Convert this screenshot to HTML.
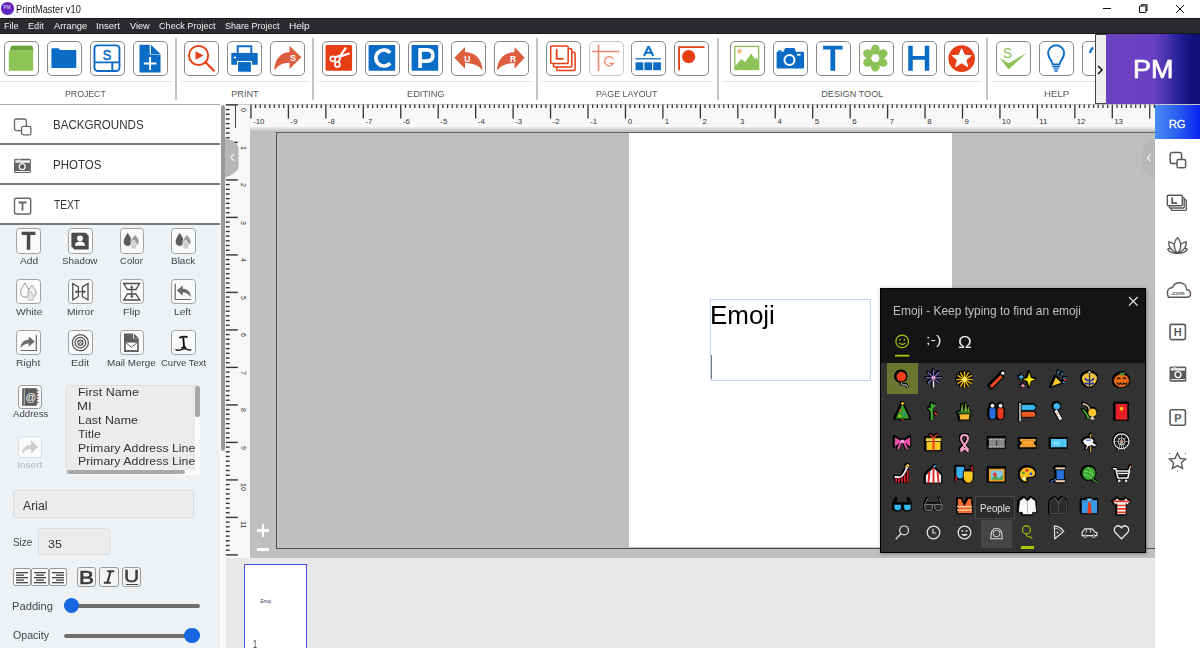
<!DOCTYPE html>
<html><head><meta charset="utf-8">
<style>
*{margin:0;padding:0;box-sizing:border-box;}
html,body{width:1200px;height:648px;overflow:hidden;background:#fff;font-family:"Liberation Sans", sans-serif;position:relative;}
.a{position:absolute;}
.t{position:absolute;white-space:nowrap;line-height:1;}
.btn{position:absolute;top:40.5px;width:35px;height:35.5px;border:1.5px solid #888;border-radius:5px;background:#fff;}
.btn svg{position:absolute;left:0;top:0;}
.tb{position:absolute;width:24.6px;height:25.4px;border:1.4px solid #a2a2a2;border-radius:3.5px;background:#f9fafb;}
.tb svg{position:absolute;left:-1.4px;top:-1.4px;overflow:visible;}
</style></head><body>
<div class="a" style="left:1.1px;top:2.4px;width:12.6px;height:12.4px;border-radius:50%;background:linear-gradient(180deg,#6a1fb8,#5a2ac0);"></div>
<div class="t" style="left:3.6px;top:6.2px;font-size:4.6px;color:#c8b8f0;font-weight:bold;">PM</div><div class="t" style="left:16.16px;top:5.00px;font-size:10.00px;color:#1a1a1a;transform:scaleX(0.925);transform-origin:0 0;">PrintMaster v10</div><div class="a" style="left:1103px;top:8px;width:7.6px;height:1px;background:#111;"></div>
<svg class="a" style="left:1138px;top:3px" width="11" height="11" viewBox="0 0 11 11"><rect x="1.5" y="3" width="6.5" height="6.5" rx="1.2" fill="none" stroke="#111" stroke-width="1.1"/><path d="M3.5 3V1.8h5.5v5.5H8" fill="none" stroke="#111" stroke-width="1.1"/></svg>
<svg class="a" style="left:1175px;top:4px" width="10" height="10" viewBox="0 0 10 10"><path d="M1 1L9 9M9 1L1 9" stroke="#111" stroke-width="1"/></svg>
<div class="a" style="left:0;top:18px;width:1200px;height:15.8px;background:#2a2b2e;border-top:1.8px solid #18191a;border-bottom:1.8px solid #141515;"></div><div class="t" style="left:4.37px;top:21.00px;font-size:9.86px;color:#f2f2f2;transform:scaleX(0.926);transform-origin:0 0;">File</div><div class="t" style="left:27.97px;top:21.00px;font-size:9.86px;color:#f2f2f2;transform:scaleX(0.928);transform-origin:0 0;">Edit</div><div class="t" style="left:54.00px;top:21.00px;font-size:9.86px;color:#f2f2f2;transform:scaleX(0.950);transform-origin:0 0;">Arrange</div><div class="t" style="left:96.14px;top:21.00px;font-size:9.86px;color:#f2f2f2;transform:scaleX(0.968);transform-origin:0 0;">Insert</div><div class="t" style="left:129.60px;top:21.00px;font-size:9.86px;color:#f2f2f2;transform:scaleX(0.930);transform-origin:0 0;">View</div><div class="t" style="left:158.74px;top:21.00px;font-size:9.86px;color:#f2f2f2;transform:scaleX(0.924);transform-origin:0 0;">Check Project</div><div class="t" style="left:225.39px;top:21.00px;font-size:9.86px;color:#f2f2f2;transform:scaleX(0.915);transform-origin:0 0;">Share Project</div><div class="t" style="left:288.69px;top:21.00px;font-size:9.86px;color:#f2f2f2;transform:scaleX(1.023);transform-origin:0 0;">Help</div><div class="a" style="left:0;top:103.5px;width:1200px;height:1px;background:#c8c8c8;"></div><div class="a" style="left:175.25px;top:38px;width:1.5px;height:61.5px;background:#c4c4c4;"></div><div class="a" style="left:312.25px;top:38px;width:1.5px;height:61.5px;background:#c4c4c4;"></div><div class="a" style="left:536.25px;top:38px;width:1.5px;height:61.5px;background:#c4c4c4;"></div><div class="a" style="left:717.25px;top:38px;width:1.5px;height:61.5px;background:#c4c4c4;"></div><div class="a" style="left:986.25px;top:38px;width:1.5px;height:61.5px;background:#c4c4c4;"></div><div class="a" style="left:0px;top:81px;width:172px;height:1px;background:#e4e4e4;"></div><div class="a" style="left:181px;top:81px;width:128px;height:1px;background:#e4e4e4;"></div><div class="a" style="left:318px;top:81px;width:214px;height:1px;background:#e4e4e4;"></div><div class="a" style="left:542px;top:81px;width:171px;height:1px;background:#e4e4e4;"></div><div class="a" style="left:723px;top:81px;width:259px;height:1px;background:#e4e4e4;"></div><div class="a" style="left:992px;top:81px;width:103px;height:1px;background:#e4e4e4;"></div><div class="t" style="left:65.40px;top:90.00px;font-size:9.13px;color:#555;transform:scaleX(0.957);transform-origin:0 0;">PROJECT</div><div class="t" style="left:231.27px;top:90.00px;font-size:9.13px;color:#555;">PRINT</div><div class="t" style="left:406.66px;top:90.00px;font-size:9.13px;color:#555;transform:scaleX(1.015);transform-origin:0 0;">EDITING</div><div class="t" style="left:596.29px;top:90.00px;font-size:9.13px;color:#555;transform:scaleX(0.975);transform-origin:0 0;">PAGE LAYOUT</div><div class="t" style="left:821.27px;top:90.00px;font-size:9.13px;color:#555;">DESIGN TOOL</div><div class="t" style="left:1043.53px;top:90.00px;font-size:9.13px;color:#555;transform:scaleX(1.060);transform-origin:0 0;">HELP</div><div class="btn" style="left:4px;"><svg width="35" height="36" viewBox="1.5 1.5 35 36"><path d="M6.3 10.2l1.2-4.2c.2-.5.5-.7 1-.7h19.6c.5 0 .8.2 1 .7l1.1 4.2z" fill="#6aa53a"/><path d="M5.3 10.2h24.3v19.5c0 .3-.2.5-.5.5h-23.3c-.3 0-.5-.2-.5-.5z" fill="#8cc456"/><path d="M5.3 10.4h24.3" stroke="#a8d880" stroke-width="0.6" stroke-dasharray="1 1"/></svg></div><div class="btn" style="left:47px;"><svg width="35" height="36" viewBox="1.5 1.5 35 36"><path d="M4.9 9.3c0-.8.4-1.5 1.2-1.5h5.5c.6 0 1 .3 1.3.8l.6.9h15.1c.8 0 1.2.5 1.2 1.2v15.6c0 .8-.4 1.2-1.2 1.2h-22.5c-.8 0-1.2-.4-1.2-1.2z" fill="#0b6cc6"/></svg></div><div class="btn" style="left:90px;"><svg width="35" height="36" viewBox="1.5 1.5 35 36"><rect x="4.95" y="4.85" width="25" height="25.7" rx="3.2" fill="none" stroke="#0b6cc6" stroke-width="1.9"/><path d="M4.95 21.9h25M22.8 21.9v8.6" stroke="#0b6cc6" stroke-width="1.9"/><text x="17.5" y="19.6" font-size="15" fill="#0b6cc6" stroke="#0b6cc6" stroke-width="0.6" text-anchor="middle" font-family="Liberation Sans" transform="translate(17.5 0) scale(0.85 1) translate(-17.5 0)">S</text></svg></div><div class="btn" style="left:133px;"><svg width="35" height="36" viewBox="1.5 1.5 35 36"><path d="M7 4.25h10.2v9.8h10.8v17.95h-21z" fill="#0b6cc6"/><path d="M18.4 4.25l9.6 9.3h-9.6z" fill="#0b6cc6"/><path d="M17.6 16.6v12.8M11.3 23h12.7" stroke="#fff" stroke-width="1.9"/></svg></div><div class="btn" style="left:184px;"><svg width="35" height="36" viewBox="1.5 1.5 35 36"><circle cx="15.1" cy="14.95" r="9.6" fill="none" stroke="#e83e16" stroke-width="1.9"/><path d="M22 21.8l9 9" stroke="#e83e16" stroke-width="2.1"/><path d="M12 10.75l8 4.25-8 4.2z" fill="#e83e16"/></svg></div><div class="btn" style="left:227px;"><svg width="35" height="36" viewBox="1.5 1.5 35 36"><path d="M11.2 13v-7.3h13.6v7.3" fill="none" stroke="#0b6cc6" stroke-width="1.9"/><path d="M4.8 12.4h26.4v11.9h-26.4z" fill="#0b6cc6"/><rect x="11" y="21" width="14" height="10.8" fill="#0b6cc6" stroke="#fff" stroke-width="1.1"/><circle cx="8.5" cy="17" r="1.1" fill="#fff"/></svg></div><div class="btn" style="left:270px;"><svg width="35" height="36" viewBox="1.5 1.5 35 36"><path d="M4.8 30.25C4.8 19 11 12 20 11.4V5.3L31.9 16.7 20 28.4V22.2C13 22.2 8 25 4.8 30.25z" fill="#dc5e3e"/><text x="23.4" y="20.6" font-size="9" font-weight="bold" fill="#fff" text-anchor="middle" font-family="Liberation Sans">S</text></svg></div><div class="btn" style="left:322px;"><svg width="35" height="36" viewBox="1.5 1.5 35 36"><rect x="4" y="4.6" width="26.6" height="25.7" rx="1.5" fill="#e83e16"/><circle cx="11.3" cy="18.4" r="2.5" fill="none" stroke="#fff" stroke-width="1.7"/><circle cx="15.9" cy="23.9" r="2.5" fill="none" stroke="#fff" stroke-width="1.7"/><path d="M13.5 16.8l5.5-1.8 5.5-7.8M17.2 21.5l1.8-5.5 9.2-3.2" fill="none" stroke="#fff" stroke-width="2.2"/></svg></div><div class="btn" style="left:365px;"><svg width="35" height="36" viewBox="1.5 1.5 35 36"><rect x="4.1" y="4.6" width="26.6" height="25.7" rx="1" fill="#0b6cc6"/><path d="M25.6 12.4a8 8 0 1 0 0 10.2" fill="none" stroke="#fff" stroke-width="3.6"/></svg></div><div class="btn" style="left:408px;"><svg width="35" height="36" viewBox="1.5 1.5 35 36"><rect x="4.1" y="4.6" width="26.6" height="25.7" rx="1" fill="#0b6cc6"/><path d="M12.6 27.6v-18.2h6.6c4 0 6.2 2.2 6.2 5.6s-2.2 5.6-6.2 5.6h-6.6" fill="none" stroke="#fff" stroke-width="3.6"/></svg></div><div class="btn" style="left:451px;"><svg width="35" height="36" viewBox="1.5 1.5 35 36"><path d="M31.9 30.3C31.9 19 25 12 14.5 11.6V6.4L3.8 17.3 14.5 28.2V22.6C21.5 22.6 28.5 24.5 31.9 30.3z" fill="#dc5e3e"/><text x="16.8" y="21.9" font-size="8.5" font-weight="bold" fill="#fff" text-anchor="middle" font-family="Liberation Sans">U</text></svg></div><div class="btn" style="left:494px;"><svg width="35" height="36" viewBox="1.5 1.5 35 36"><path d="M3.6 30.3C3.6 19 10.5 12 21 11.6V6.4L31.2 17.3 21 28.2V22.6C14 22.6 7 24.5 3.6 30.3z" fill="#dc5e3e"/><text x="19.6" y="21.9" font-size="8.5" font-weight="bold" fill="#fff" text-anchor="middle" font-family="Liberation Sans">R</text></svg></div><div class="btn" style="left:546px;"><svg width="35" height="36" viewBox="1.5 1.5 35 36"><rect x="11.3" y="11.8" width="18.3" height="18.3" rx="1.2" fill="#fff" stroke="#e83e16" stroke-width="1.5"/><rect x="8" y="8.3" width="18.3" height="18.3" rx="1.2" fill="#fff" stroke="#e83e16" stroke-width="1.5"/><rect x="5.2" y="5.4" width="17.5" height="17.5" rx="1.2" fill="#fff" stroke="#e83e16" stroke-width="1.5"/><path d="M11.2 8.7v9.7h6.8" fill="none" stroke="#e83e16" stroke-width="1.8"/></svg></div><div class="btn" style="left:588.5px;border-color:#c8c8c8;"><svg width="35" height="36" viewBox="1.5 1.5 35 36"><path d="M10 4.25v26.25M3.2 11h27.5" stroke="#f0866c" stroke-width="1.6"/><path d="M24.6 18.3a4.6 4.6 0 1 0 .3 4.5h-4" fill="none" stroke="#f0866c" stroke-width="1.3"/></svg></div><div class="btn" style="left:631px;"><svg width="35" height="36" viewBox="1.5 1.5 35 36"><path d="M13.5 15.5l4.2-9h.8l4.2 9M15 12.3h6" fill="none" stroke="#0b6cc6" stroke-width="2"/><path d="M5 18.3h25.4" stroke="#0b6cc6" stroke-width="1.3"/><rect x="5" y="21.8" width="7.7" height="7.9" fill="#0b6cc6"/><rect x="13.9" y="21.8" width="7.7" height="7.9" fill="#0b6cc6"/><rect x="22.7" y="21.8" width="7.7" height="7.9" fill="#0b6cc6"/></svg></div><div class="btn" style="left:674px;"><svg width="35" height="36" viewBox="1.5 1.5 35 36"><path d="M5.6 29.7V6.6h25.4" fill="none" stroke="#e83e16" stroke-width="1.9"/><circle cx="15.2" cy="16.2" r="6.6" fill="#e83e16"/></svg></div><div class="btn" style="left:730px;"><svg width="35" height="36" viewBox="1.5 1.5 35 36"><rect x="5.35" y="5.9" width="23.8" height="23.1" fill="none" stroke="#8cc257" stroke-width="1.3"/><path d="M5.3 29.6v-3.6l6.5-7.5 4 3 5.8-8.5 3.7 5.5 1.5-1.2 2.8 3.5v8.8z" fill="#8cc257"/><circle cx="10" cy="10.8" r="2.2" fill="#f0c088"/></svg></div><div class="btn" style="left:772.5px;"><svg width="35" height="36" viewBox="1.5 1.5 35 36"><path d="M4.1 12.5c0-.8.5-1.3 1.3-1.3h5.6l1.7-3.7h9.2l1.5 3.7h6.8c.8 0 1.3.5 1.3 1.3v14.3c0 .8-.5 1.3-1.3 1.3h-24.8c-.8 0-1.3-.5-1.3-1.3z" fill="#0b6cc6"/><circle cx="17" cy="19.6" r="5" fill="none" stroke="#fff" stroke-width="2"/><rect x="24.5" y="13.3" width="3.5" height="1.8" fill="#fff"/><rect x="5.5" y="9.8" width="3.5" height="1.5" fill="#0b6cc6"/></svg></div><div class="btn" style="left:816px;"><svg width="35" height="36" viewBox="1.5 1.5 35 36"><path d="M7.6 5.3h19.4v3.8h-7.3v21.15h-4.8v-21.15h-7.3z" fill="#0b6cc6"/></svg></div><div class="btn" style="left:859px;"><svg width="35" height="36" viewBox="1.5 1.5 35 36"><ellipse cx="16.85" cy="9.3" rx="4.4" ry="5.2" transform="rotate(0 16.85 17.6)" fill="#8cc257"/><ellipse cx="16.85" cy="9.3" rx="4.4" ry="5.2" transform="rotate(60 16.85 17.6)" fill="#8cc257"/><ellipse cx="16.85" cy="9.3" rx="4.4" ry="5.2" transform="rotate(120 16.85 17.6)" fill="#8cc257"/><ellipse cx="16.85" cy="9.3" rx="4.4" ry="5.2" transform="rotate(180 16.85 17.6)" fill="#8cc257"/><ellipse cx="16.85" cy="9.3" rx="4.4" ry="5.2" transform="rotate(240 16.85 17.6)" fill="#8cc257"/><ellipse cx="16.85" cy="9.3" rx="4.4" ry="5.2" transform="rotate(300 16.85 17.6)" fill="#8cc257"/><circle cx="16.85" cy="17.6" r="3.9" fill="#fff"/></svg></div><div class="btn" style="left:902px;"><svg width="35" height="36" viewBox="1.5 1.5 35 36"><path d="M6.75 5.3h4.5v10.3h12v-10.3h4.5v24.95h-4.5v-10.9h-12v10.9h-4.5z" fill="#0b6cc6"/></svg></div><div class="btn" style="left:944px;"><svg width="35" height="36" viewBox="1.5 1.5 35 36"><circle cx="18.15" cy="18.1" r="13.3" fill="#e83e16"/><path d="M18.15 7.2l3.1 7 7.4.5-5.7 4.8 1.9 7.4-6.7-4.1-6.7 4.1 1.9-7.4-5.7-4.8 7.4-.5z" fill="#fff"/></svg></div><div class="btn" style="left:996px;"><svg width="35" height="36" viewBox="1.5 1.5 35 36"><path d="M4.2 17.5l8.8 11.4 18.1-16.3-18 10.2z" fill="#8cc257"/><text x="11.8" y="17.3" font-size="14" fill="#8cc257" text-anchor="middle" font-family="Liberation Sans">S</text></svg></div><div class="btn" style="left:1039px;"><svg width="35" height="36" viewBox="1.5 1.5 35 36"><path d="M14.2 24c0-3.5-4.6-6-4.6-11.2a8 8 0 0 1 16 0c0 5.2-4.6 7.7-4.6 11.2z" fill="none" stroke="#0b6cc6" stroke-width="1.9"/><path d="M14 26.2h7.2M15 28.4h5.2M16 30.5h3.2" stroke="#0b6cc6" stroke-width="1.4"/></svg></div><div class="btn" style="left:1082px;"><svg width="35" height="36" viewBox="1.5 1.5 35 36"><path d="M7.5 12.5c.5-3 2-5.5 4-6.5l.5 2.5c-1 .8-2 2.2-2.3 4z" fill="#0b6cc6"/></svg></div><div class="a" style="left:1094.5px;top:34px;width:11.5px;height:70px;background:#eee;border-left:1.5px solid #444;border-top:1px solid #444;border-bottom:1px solid #444;"></div>
<svg class="a" style="left:1096px;top:64px" width="8" height="12" viewBox="0 0 8 12"><path d="M2 2l4 4-4 4" fill="none" stroke="#111" stroke-width="1.5"/></svg>
<div class="a" style="left:1106px;top:34px;width:94px;height:70px;background:linear-gradient(90deg,#6c42c2 0%,#6a40c2 50%,#4a34b0 64%,#26229a 76%,#121280 88%,#0e0e78 100%);"></div>
<div class="t" style="left:1133.35px;top:57.00px;font-size:24.93px;color:#fff;transform:scaleX(1.078);transform-origin:0 0;-webkit-text-stroke:0.7px #fff;">PM</div><div class="a" style="left:0;top:104px;width:221px;height:120px;background:#fff;"></div><div class="a" style="left:0;top:224px;width:221px;height:424px;background:#eff2f5;"></div><div class="a" style="left:0;top:143.4px;width:221px;height:2px;background:#7a7a7a;"></div><div class="a" style="left:0;top:183.3px;width:221px;height:2px;background:#7a7a7a;"></div><div class="a" style="left:0;top:223.2px;width:221px;height:2px;background:#7a7a7a;"></div><div class="a" style="left:0;top:104px;width:221px;height:1px;background:#aaa;"></div><div class="t" style="left:52.87px;top:120.00px;font-size:11.88px;color:#333;transform:scaleX(0.974);transform-origin:0 0;">BACKGROUNDS</div><div class="t" style="left:52.88px;top:160.00px;font-size:11.88px;color:#333;transform:scaleX(0.968);transform-origin:0 0;">PHOTOS</div><div class="t" style="left:53.60px;top:200.00px;font-size:11.88px;color:#333;transform:scaleX(0.850);transform-origin:0 0;">TEXT</div><svg class="a" style="left:0;top:104px" width="40" height="120" viewBox="0 104 40 120"><rect x="14.5" y="119" width="11.8" height="11.6" rx="2" fill="#fff" stroke="#666" stroke-width="1.3"/><rect x="21.5" y="126.3" width="9.4" height="8.6" rx="1.8" fill="#fff" stroke="#666" stroke-width="1.3"/><rect x="14" y="158.8" width="16.9" height="14.3" rx="1.5" fill="#666"/><rect x="15.3" y="160.4" width="14.6" height="2.3" fill="#fff"/><rect x="17" y="159.6" width="4" height="2.5" fill="#ddd"/><rect x="15.3" y="171" width="14.6" height="0.9" fill="#fff"/><circle cx="22.2" cy="166.6" r="3.5" fill="#fff"/><circle cx="22.2" cy="166.6" r="2.3" fill="#555"/><rect x="14.5" y="198.2" width="16.2" height="15.8" rx="1.8" fill="#fff" stroke="#666" stroke-width="1.4"/><path d="M18.5 202.5h8M22.5 202.5v8" stroke="#666" stroke-width="1.8"/></svg><div class="tb" style="left:16px;top:228.3px;"><svg width="25" height="25" viewBox="0 0 25 25"><path d="M5.7 3.7h13.7v3.2h-5.1v14.8h-3.5v-14.8h-5.1z" fill="#4a4a4a"/></svg></div><div class="t" style="left:19.80px;top:257.00px;font-size:8.99px;color:#444;transform:scaleX(1.132);transform-origin:0 0;">Add</div><div class="tb" style="left:68px;top:228.3px;"><svg width="25" height="25" viewBox="0 0 25 25"><path d="M3.4 5.6c0-.5.4-.9.9-.9h13.4l3 3v12.9c0 .5-.4.9-.9.9h-13.4l-3-3z" fill="#4a4a4a"/><circle cx="12" cy="10.3" r="2.9" fill="#fff"/><path d="M6.8 17.8c.3-3 2.3-4.3 5.2-4.3s4.9 1.3 5.2 4.3z" fill="#fff"/></svg></div><div class="t" style="left:62.46px;top:257.00px;font-size:8.99px;color:#444;transform:scaleX(1.091);transform-origin:0 0;">Shadow</div><div class="tb" style="left:119.5px;top:228.3px;"><svg width="25" height="25" viewBox="0 0 25 25"><path d="M8.7 4.4c-2.2 3.3-4.4 6-4.4 9.4a4.4 4.4 0 0 0 8.8 0c0-3.4-2.2-6.1-4.4-9.4z" fill="#5c5c5c" stroke="#fff" stroke-width="0.6"/><path d="M16 6.5c-1.8 2.6-4.1 4.6-4.1 6.9a4.1 4.1 0 0 0 8.2 0c0-2.3-2.3-4.3-4.1-6.9z" fill="#9a9a9a" stroke="#fff" stroke-width="0.7"/><path d="M14.75 11.8c-1.6 2.5-3.15 4.3-3.15 6.4a3.15 3.15 0 0 0 6.3 0c0-2.1-1.55-3.9-3.15-6.4z" fill="#cfcfcf" stroke="#fff" stroke-width="0.7"/></svg></div><div class="t" style="left:120.02px;top:257.00px;font-size:8.99px;color:#444;transform:scaleX(1.063);transform-origin:0 0;">Color</div><div class="tb" style="left:171.3px;top:228.3px;"><svg width="25" height="25" viewBox="0 0 25 25"><path d="M8.7 4.4c-2.2 3.3-4.4 6-4.4 9.4a4.4 4.4 0 0 0 8.8 0c0-3.4-2.2-6.1-4.4-9.4z" fill="#5c5c5c" stroke="#fff" stroke-width="0.6"/><path d="M16 6.5c-1.8 2.6-4.1 4.6-4.1 6.9a4.1 4.1 0 0 0 8.2 0c0-2.3-2.3-4.3-4.1-6.9z" fill="#9a9a9a" stroke="#fff" stroke-width="0.7"/><path d="M14.75 11.8c-1.6 2.5-3.15 4.3-3.15 6.4a3.15 3.15 0 0 0 6.3 0c0-2.1-1.55-3.9-3.15-6.4z" fill="#cfcfcf" stroke="#fff" stroke-width="0.7"/></svg></div><div class="t" style="left:171.20px;top:257.00px;font-size:8.99px;color:#444;transform:scaleX(1.108);transform-origin:0 0;">Black</div><div class="tb" style="left:16px;top:279px;"><svg width="25" height="25" viewBox="0 0 25 25"><path d="M8.9 4c-2.2 3.5-4.3 6.4-4.3 9.8a4.3 4.3 0 0 0 8.6 0c0-3.4-2.1-6.3-4.3-9.8z" fill="none" stroke="#8a8a8a" stroke-width="0.9"/><path d="M16 6.5c-1.8 2.6-4.1 4.6-4.1 6.9a4.1 4.1 0 0 0 8.2 0c0-2.3-2.3-4.3-4.1-6.9z" fill="#f4f4f4" stroke="#8a8a8a" stroke-width="0.9"/><path d="M14.75 12c-1.6 2.5-3.15 4.3-3.15 6.4a3.15 3.15 0 0 0 6.3 0c0-2.1-1.55-3.9-3.15-6.4z" fill="#e4e4e4" stroke="#aaa" stroke-width="0.6"/></svg></div><div class="t" style="left:16.00px;top:308.00px;font-size:8.99px;color:#444;transform:scaleX(1.151);transform-origin:0 0;">White</div><div class="tb" style="left:68px;top:279px;"><svg width="25" height="25" viewBox="0 0 25 25"><path d="M4.8 4.5l5.6 3.4v9.6l-5.6 3.4z M20 4.5l-5.6 3.4v9.6l5.6 3.4z" fill="none" stroke="#4a4a4a" stroke-width="1.3"/><path d="M7.2 12.7h10.4" stroke="#4a4a4a" stroke-width="1.1"/><path d="M7 12.7l2.3-1.8v3.6zM17.8 12.7l-2.3-1.8v3.6z" fill="#4a4a4a"/></svg></div><div class="t" style="left:66.59px;top:308.00px;font-size:8.99px;color:#444;transform:scaleX(1.131);transform-origin:0 0;">Mirror</div><div class="tb" style="left:119.5px;top:279px;"><svg width="25" height="25" viewBox="0 0 25 25"><path d="M4.7 4.5h16l-3.8 6h-8.4z M4.7 21h16l-3.8-6h-8.4z" fill="none" stroke="#4a4a4a" stroke-width="1.3"/><path d="M12.7 6.8v12" stroke="#4a4a4a" stroke-width="1.1"/><path d="M12.7 6.5l-1.8 2.3h3.6zM12.7 19l-1.8-2.3h3.6z" fill="#4a4a4a"/></svg></div><div class="t" style="left:123.14px;top:308.00px;font-size:8.99px;color:#444;transform:scaleX(1.195);transform-origin:0 0;">Flip</div><div class="tb" style="left:171.3px;top:279px;"><svg width="25" height="25" viewBox="0 0 25 25"><path d="M4.2 4.8v15.7h15.7" fill="none" stroke="#666" stroke-width="1.2"/><path d="M19.9 18.2c-.3-5.7-3.5-8.5-8.2-8.5v-3.3l-5.9 5.2 5.9 5.2v-3.4c3.7 0 6.3 1.5 8.2 4.8z" fill="#6a6a6a"/></svg></div><div class="t" style="left:174.49px;top:308.00px;font-size:8.99px;color:#444;transform:scaleX(1.130);transform-origin:0 0;">Left</div><div class="tb" style="left:16px;top:330px;"><svg width="25" height="25" viewBox="0 0 25 25"><path d="M20.3 4.8v15.7h-15.7" fill="none" stroke="#666" stroke-width="1.2"/><path d="M4.6 18.2c.3-5.7 3.5-8.5 8.2-8.5v-3.3l5.9 5.2-5.9 5.2v-3.4c-3.7 0-6.3 1.5-8.2 4.8z" fill="#6a6a6a"/></svg></div><div class="t" style="left:16.47px;top:359.00px;font-size:8.99px;color:#444;transform:scaleX(1.157);transform-origin:0 0;">Right</div><div class="tb" style="left:68px;top:330px;"><svg width="25" height="25" viewBox="0 0 25 25"><circle cx="12.35" cy="12.65" r="8" fill="none" stroke="#4a4a4a" stroke-width="1.2"/><circle cx="12.35" cy="12.65" r="5.3" fill="none" stroke="#4a4a4a" stroke-width="1.2"/><circle cx="12.35" cy="12.65" r="2.6" fill="none" stroke="#4a4a4a" stroke-width="1.1"/><path d="M10 10.3l4.7 4.7M14.7 10.3l-4.7 4.7" stroke="#4a4a4a" stroke-width="0.8"/></svg></div><div class="t" style="left:70.76px;top:359.00px;font-size:8.99px;color:#444;transform:scaleX(1.174);transform-origin:0 0;">Edit</div><div class="tb" style="left:119.5px;top:330px;"><svg width="25" height="25" viewBox="0 0 25 25"><path d="M5 3.6h9v5h5.8v13.4h-14.8z" fill="#5e5e5e"/><path d="M14.9 3.6l4.9 4.6h-4.9z" fill="#5e5e5e"/><rect x="6.6" y="12.4" width="11.6" height="7.8" fill="#fff" stroke="#5e5e5e" stroke-width="0.4"/><path d="M6.8 12.8l5.6 4.4 5.6-4.4" fill="none" stroke="#5e5e5e" stroke-width="1"/></svg></div><div class="t" style="left:107.21px;top:359.00px;font-size:8.99px;color:#444;transform:scaleX(1.096);transform-origin:0 0;">Mail Merge</div><div class="tb" style="left:171.3px;top:330px;"><svg width="25" height="25" viewBox="0 0 25 25"><path d="M8.3 7.8c2.2-1.2 5-1.5 8.2-.8M12.2 7.2l.9 10.2M10.3 17.6h5" fill="none" stroke="#111" stroke-width="1.9"/><path d="M4.5 19.2c1.5 1.5 3 1.3 5 .6s4.5-1.5 6.5-.5 2.8 1.5 4.2.2" fill="none" stroke="#111" stroke-width="1.3"/></svg></div><div class="t" style="left:160.53px;top:359.00px;font-size:8.99px;color:#444;transform:scaleX(1.056);transform-origin:0 0;">Curve Text</div><div class="tb" style="left:18px;top:385px;width:24px;height:23.5px;border-color:#999;"><svg width="24" height="24" viewBox="0 0 24 24"><rect x="4.2" y="3.2" width="14.6" height="17.6" fill="#5a5a5a"/><path d="M18.8 5.5h1.6M18.8 8.5h1.6M18.8 11.5h1.6M18.8 14.5h1.6M18.8 17.5h1.6" stroke="#5a5a5a" stroke-width="1.4"/><path d="M6.3 3.5v17" stroke="#ddd" stroke-width="0.7"/><text x="12.8" y="15.6" font-size="10.5" fill="#fff" text-anchor="middle" font-family="Liberation Sans">@</text></svg></div><div class="t" style="left:13.00px;top:410.00px;font-size:9.13px;color:#444;transform:scaleX(1.055);transform-origin:0 0;">Address</div><div class="tb" style="left:18px;top:435.7px;width:24px;height:22.7px;border-color:#ddd;"><svg width="24" height="24" viewBox="0 0 24 24"><path d="M4 19c0-6 4-9 9-9v-4.5l7 6.5-7 6.5v-4.5c-4 0-7 2-9 5z" fill="#ccc"/></svg></div><div class="t" style="left:17.09px;top:461.00px;font-size:9.13px;color:#b8b8b8;transform:scaleX(1.113);transform-origin:0 0;">Insert</div><div class="a" style="left:66.4px;top:385px;width:134px;height:90px;background:#ececec;border:1px solid #ddd;border-radius:3px;"></div><div class="a" style="left:195px;top:386px;width:5px;height:89px;background:#fbfbfb;"></div><div class="a" style="left:67px;top:470px;width:133px;height:5px;background:#fbfbfb;border-radius:0 0 3px 3px;"></div><div class="a" style="left:195.4px;top:385.5px;width:4.3px;height:31.5px;background:#a8a8a8;border-radius:2px;"></div><div class="a" style="left:67px;top:470.3px;width:118px;height:4px;background:#a8a8a8;border-radius:2px;"></div><div class="t" style="left:77.50px;top:387.00px;font-size:11.30px;color:#333;transform:scaleX(1.103);transform-origin:0 0;">First Name</div><div class="t" style="left:77.44px;top:401.00px;font-size:11.30px;color:#333;transform:scaleX(1.170);transform-origin:0 0;">MI</div><div class="t" style="left:77.51px;top:415.00px;font-size:11.30px;color:#333;transform:scaleX(1.098);transform-origin:0 0;">Last Name</div><div class="t" style="left:78.25px;top:429.00px;font-size:11.30px;color:#333;transform:scaleX(1.087);transform-origin:0 0;">Title</div><div class="t" style="left:77.51px;top:443.00px;font-size:11.30px;color:#333;transform:scaleX(1.093);transform-origin:0 0;">Primary Address Line</div><div class="t" style="left:77.51px;top:456.00px;font-size:11.30px;color:#333;transform:scaleX(1.093);transform-origin:0 0;">Primary Address Line</div><div class="a" style="left:13px;top:490.4px;width:180.7px;height:27.2px;background:#ececec;border:1px solid #dcdcdc;border-radius:3px;"></div><div class="t" style="left:22.80px;top:500.00px;font-size:12.46px;color:#333;transform:scaleX(0.980);transform-origin:0 0;">Arial</div><div class="t" style="left:12.55px;top:538.00px;font-size:10.14px;color:#444;transform:scaleX(0.980);transform-origin:0 0;">Size</div><div class="a" style="left:38.4px;top:528px;width:71.3px;height:27px;background:#ececec;border:1px solid #dcdcdc;border-radius:3px;"></div><div class="t" style="left:47.56px;top:539.00px;font-size:11.59px;color:#333;transform:scaleX(1.083);transform-origin:0 0;">35</div><div class="a" style="left:13px;top:567.6px;width:17.5px;height:18.7px;background:#fafafa;border:1px solid #999;border-radius:2px;"></div><div class="a" style="left:31px;top:567.6px;width:17.5px;height:18.7px;background:#fafafa;border:1px solid #999;border-radius:2px;"></div><div class="a" style="left:49px;top:567.6px;width:17.5px;height:18.7px;background:#fafafa;border:1px solid #999;border-radius:2px;"></div><svg class="a" style="left:13px;top:567px" width="54" height="20" viewBox="0 0 54 20"><rect x="3" y="5.0" width="12" height="1.3" fill="#444"/><rect x="3" y="7.5" width="8" height="1.3" fill="#444"/><rect x="3" y="10.0" width="12" height="1.3" fill="#444"/><rect x="3" y="12.5" width="8" height="1.3" fill="#444"/><rect x="3" y="15.0" width="12" height="1.3" fill="#444"/><rect x="21.0" y="5.0" width="12" height="1.3" fill="#444"/><rect x="23.0" y="7.5" width="8" height="1.3" fill="#444"/><rect x="21.0" y="10.0" width="12" height="1.3" fill="#444"/><rect x="23.0" y="12.5" width="8" height="1.3" fill="#444"/><rect x="21.0" y="15.0" width="12" height="1.3" fill="#444"/><rect x="39" y="5.0" width="12" height="1.3" fill="#444"/><rect x="43" y="7.5" width="8" height="1.3" fill="#444"/><rect x="39" y="10.0" width="12" height="1.3" fill="#444"/><rect x="43" y="12.5" width="8" height="1.3" fill="#444"/><rect x="39" y="15.0" width="12" height="1.3" fill="#444"/></svg><div class="a" style="left:76.7px;top:566.5px;width:19.5px;height:20px;background:#f4f4f4;border:1px solid #999;border-radius:3px;"></div><div class="a" style="left:99.3px;top:566.5px;width:19.5px;height:20px;background:#f4f4f4;border:1px solid #999;border-radius:3px;"></div><div class="a" style="left:121.9px;top:566.5px;width:19.5px;height:20px;background:#f4f4f4;border:1px solid #999;border-radius:3px;"></div><div class="t" style="left:78.71px;top:569.00px;font-size:18.12px;color:#3a3a3a;transform:scaleX(1.238);transform-origin:0 0;-webkit-text-stroke:0.6px #3a3a3a;">B</div><svg class="a" style="left:99.3px;top:566.5px" width="20" height="20" viewBox="0 0 20 20"><path d="M8.2 4.2h7M4.8 15.8h7M11.7 4.2L8.3 15.8" stroke="#3a3a3a" stroke-width="2.1" fill="none"/></svg><div class="t" style="left:124.42px;top:569.00px;font-size:16.67px;color:#3a3a3a;transform:scaleX(1.263);transform-origin:0 0;-webkit-text-stroke:0.4px #3a3a3a;">U</div><div class="a" style="left:125.5px;top:583.5px;width:12px;height:1px;background:#444;"></div><div class="t" style="left:12.10px;top:601.00px;font-size:10.72px;color:#444;transform:scaleX(1.043);transform-origin:0 0;">Padding</div><div class="a" style="left:64.3px;top:604px;width:136px;height:3.5px;background:#6e6e6e;border-radius:2px;"></div><div class="a" style="left:63.5px;top:597.5px;width:15.6px;height:15.6px;background:#1566e0;border-radius:50%;"></div><div class="t" style="left:12.52px;top:630.00px;font-size:10.72px;color:#444;transform:scaleX(0.990);transform-origin:0 0;">Opacity</div><div class="a" style="left:64.3px;top:634px;width:136px;height:3.5px;background:#6e6e6e;border-radius:2px;"></div><div class="a" style="left:184.1px;top:627.5px;width:15.6px;height:15.6px;background:#1566e0;border-radius:50%;"></div><div class="a" style="left:220px;top:104px;width:5.5px;height:544px;background:#fafafa;"></div><div class="a" style="left:221.3px;top:104.5px;width:4px;height:346px;background:#9a9a9a;border-radius:2px;"></div><div class="a" style="left:225.5px;top:104.5px;width:24.5px;height:453px;background:#f7f7f7;"></div><div class="a" style="left:250px;top:104.5px;width:905px;height:23px;background:#f8f8f8;"></div><div class="a" style="left:250px;top:127.4px;width:905px;height:4px;background:linear-gradient(180deg,#ececec,#c6c6c6);"></div><svg class="a" style="left:250px;top:104px" width="905" height="24" viewBox="250 104 905 24"><rect x="250.30" y="104.5" width="1.3" height="14" fill="#333"/><rect x="254.98" y="104.5" width="1.3" height="3.5" fill="#333"/><rect x="259.66" y="104.5" width="1.3" height="3.5" fill="#333"/><rect x="264.34" y="104.5" width="1.3" height="3.5" fill="#333"/><rect x="269.02" y="104.5" width="1.3" height="3.5" fill="#333"/><rect x="273.71" y="104.5" width="1.3" height="3.5" fill="#333"/><rect x="278.39" y="104.5" width="1.3" height="3.5" fill="#333"/><rect x="283.07" y="104.5" width="1.3" height="3.5" fill="#333"/><rect x="287.75" y="104.5" width="1.3" height="14" fill="#333"/><rect x="292.43" y="104.5" width="1.3" height="3.5" fill="#333"/><rect x="297.11" y="104.5" width="1.3" height="3.5" fill="#333"/><rect x="301.79" y="104.5" width="1.3" height="3.5" fill="#333"/><rect x="306.47" y="104.5" width="1.3" height="3.5" fill="#333"/><rect x="311.16" y="104.5" width="1.3" height="3.5" fill="#333"/><rect x="315.84" y="104.5" width="1.3" height="3.5" fill="#333"/><rect x="320.52" y="104.5" width="1.3" height="3.5" fill="#333"/><rect x="325.20" y="104.5" width="1.3" height="14" fill="#333"/><rect x="329.88" y="104.5" width="1.3" height="3.5" fill="#333"/><rect x="334.56" y="104.5" width="1.3" height="3.5" fill="#333"/><rect x="339.24" y="104.5" width="1.3" height="3.5" fill="#333"/><rect x="343.92" y="104.5" width="1.3" height="3.5" fill="#333"/><rect x="348.61" y="104.5" width="1.3" height="3.5" fill="#333"/><rect x="353.29" y="104.5" width="1.3" height="3.5" fill="#333"/><rect x="357.97" y="104.5" width="1.3" height="3.5" fill="#333"/><rect x="362.65" y="104.5" width="1.3" height="14" fill="#333"/><rect x="367.33" y="104.5" width="1.3" height="3.5" fill="#333"/><rect x="372.01" y="104.5" width="1.3" height="3.5" fill="#333"/><rect x="376.69" y="104.5" width="1.3" height="3.5" fill="#333"/><rect x="381.37" y="104.5" width="1.3" height="3.5" fill="#333"/><rect x="386.06" y="104.5" width="1.3" height="3.5" fill="#333"/><rect x="390.74" y="104.5" width="1.3" height="3.5" fill="#333"/><rect x="395.42" y="104.5" width="1.3" height="3.5" fill="#333"/><rect x="400.10" y="104.5" width="1.3" height="14" fill="#333"/><rect x="404.78" y="104.5" width="1.3" height="3.5" fill="#333"/><rect x="409.46" y="104.5" width="1.3" height="3.5" fill="#333"/><rect x="414.14" y="104.5" width="1.3" height="3.5" fill="#333"/><rect x="418.82" y="104.5" width="1.3" height="3.5" fill="#333"/><rect x="423.51" y="104.5" width="1.3" height="3.5" fill="#333"/><rect x="428.19" y="104.5" width="1.3" height="3.5" fill="#333"/><rect x="432.87" y="104.5" width="1.3" height="3.5" fill="#333"/><rect x="437.55" y="104.5" width="1.3" height="14" fill="#333"/><rect x="442.23" y="104.5" width="1.3" height="3.5" fill="#333"/><rect x="446.91" y="104.5" width="1.3" height="3.5" fill="#333"/><rect x="451.59" y="104.5" width="1.3" height="3.5" fill="#333"/><rect x="456.27" y="104.5" width="1.3" height="3.5" fill="#333"/><rect x="460.96" y="104.5" width="1.3" height="3.5" fill="#333"/><rect x="465.64" y="104.5" width="1.3" height="3.5" fill="#333"/><rect x="470.32" y="104.5" width="1.3" height="3.5" fill="#333"/><rect x="475.00" y="104.5" width="1.3" height="14" fill="#333"/><rect x="479.68" y="104.5" width="1.3" height="3.5" fill="#333"/><rect x="484.36" y="104.5" width="1.3" height="3.5" fill="#333"/><rect x="489.04" y="104.5" width="1.3" height="3.5" fill="#333"/><rect x="493.72" y="104.5" width="1.3" height="3.5" fill="#333"/><rect x="498.41" y="104.5" width="1.3" height="3.5" fill="#333"/><rect x="503.09" y="104.5" width="1.3" height="3.5" fill="#333"/><rect x="507.77" y="104.5" width="1.3" height="3.5" fill="#333"/><rect x="512.45" y="104.5" width="1.3" height="14" fill="#333"/><rect x="517.13" y="104.5" width="1.3" height="3.5" fill="#333"/><rect x="521.81" y="104.5" width="1.3" height="3.5" fill="#333"/><rect x="526.49" y="104.5" width="1.3" height="3.5" fill="#333"/><rect x="531.17" y="104.5" width="1.3" height="3.5" fill="#333"/><rect x="535.86" y="104.5" width="1.3" height="3.5" fill="#333"/><rect x="540.54" y="104.5" width="1.3" height="3.5" fill="#333"/><rect x="545.22" y="104.5" width="1.3" height="3.5" fill="#333"/><rect x="549.90" y="104.5" width="1.3" height="14" fill="#333"/><rect x="554.58" y="104.5" width="1.3" height="3.5" fill="#333"/><rect x="559.26" y="104.5" width="1.3" height="3.5" fill="#333"/><rect x="563.94" y="104.5" width="1.3" height="3.5" fill="#333"/><rect x="568.62" y="104.5" width="1.3" height="3.5" fill="#333"/><rect x="573.31" y="104.5" width="1.3" height="3.5" fill="#333"/><rect x="577.99" y="104.5" width="1.3" height="3.5" fill="#333"/><rect x="582.67" y="104.5" width="1.3" height="3.5" fill="#333"/><rect x="587.35" y="104.5" width="1.3" height="14" fill="#333"/><rect x="592.03" y="104.5" width="1.3" height="3.5" fill="#333"/><rect x="596.71" y="104.5" width="1.3" height="3.5" fill="#333"/><rect x="601.39" y="104.5" width="1.3" height="3.5" fill="#333"/><rect x="606.07" y="104.5" width="1.3" height="3.5" fill="#333"/><rect x="610.76" y="104.5" width="1.3" height="3.5" fill="#333"/><rect x="615.44" y="104.5" width="1.3" height="3.5" fill="#333"/><rect x="620.12" y="104.5" width="1.3" height="3.5" fill="#333"/><rect x="624.80" y="104.5" width="1.3" height="14" fill="#333"/><rect x="629.48" y="104.5" width="1.3" height="3.5" fill="#333"/><rect x="634.16" y="104.5" width="1.3" height="3.5" fill="#333"/><rect x="638.84" y="104.5" width="1.3" height="3.5" fill="#333"/><rect x="643.52" y="104.5" width="1.3" height="3.5" fill="#333"/><rect x="648.21" y="104.5" width="1.3" height="3.5" fill="#333"/><rect x="652.89" y="104.5" width="1.3" height="3.5" fill="#333"/><rect x="657.57" y="104.5" width="1.3" height="3.5" fill="#333"/><rect x="662.25" y="104.5" width="1.3" height="14" fill="#333"/><rect x="666.93" y="104.5" width="1.3" height="3.5" fill="#333"/><rect x="671.61" y="104.5" width="1.3" height="3.5" fill="#333"/><rect x="676.29" y="104.5" width="1.3" height="3.5" fill="#333"/><rect x="680.97" y="104.5" width="1.3" height="3.5" fill="#333"/><rect x="685.66" y="104.5" width="1.3" height="3.5" fill="#333"/><rect x="690.34" y="104.5" width="1.3" height="3.5" fill="#333"/><rect x="695.02" y="104.5" width="1.3" height="3.5" fill="#333"/><rect x="699.70" y="104.5" width="1.3" height="14" fill="#333"/><rect x="704.38" y="104.5" width="1.3" height="3.5" fill="#333"/><rect x="709.06" y="104.5" width="1.3" height="3.5" fill="#333"/><rect x="713.74" y="104.5" width="1.3" height="3.5" fill="#333"/><rect x="718.42" y="104.5" width="1.3" height="3.5" fill="#333"/><rect x="723.11" y="104.5" width="1.3" height="3.5" fill="#333"/><rect x="727.79" y="104.5" width="1.3" height="3.5" fill="#333"/><rect x="732.47" y="104.5" width="1.3" height="3.5" fill="#333"/><rect x="737.15" y="104.5" width="1.3" height="14" fill="#333"/><rect x="741.83" y="104.5" width="1.3" height="3.5" fill="#333"/><rect x="746.51" y="104.5" width="1.3" height="3.5" fill="#333"/><rect x="751.19" y="104.5" width="1.3" height="3.5" fill="#333"/><rect x="755.88" y="104.5" width="1.3" height="3.5" fill="#333"/><rect x="760.56" y="104.5" width="1.3" height="3.5" fill="#333"/><rect x="765.24" y="104.5" width="1.3" height="3.5" fill="#333"/><rect x="769.92" y="104.5" width="1.3" height="3.5" fill="#333"/><rect x="774.60" y="104.5" width="1.3" height="14" fill="#333"/><rect x="779.28" y="104.5" width="1.3" height="3.5" fill="#333"/><rect x="783.96" y="104.5" width="1.3" height="3.5" fill="#333"/><rect x="788.64" y="104.5" width="1.3" height="3.5" fill="#333"/><rect x="793.32" y="104.5" width="1.3" height="3.5" fill="#333"/><rect x="798.01" y="104.5" width="1.3" height="3.5" fill="#333"/><rect x="802.69" y="104.5" width="1.3" height="3.5" fill="#333"/><rect x="807.37" y="104.5" width="1.3" height="3.5" fill="#333"/><rect x="812.05" y="104.5" width="1.3" height="14" fill="#333"/><rect x="816.73" y="104.5" width="1.3" height="3.5" fill="#333"/><rect x="821.41" y="104.5" width="1.3" height="3.5" fill="#333"/><rect x="826.09" y="104.5" width="1.3" height="3.5" fill="#333"/><rect x="830.77" y="104.5" width="1.3" height="3.5" fill="#333"/><rect x="835.46" y="104.5" width="1.3" height="3.5" fill="#333"/><rect x="840.14" y="104.5" width="1.3" height="3.5" fill="#333"/><rect x="844.82" y="104.5" width="1.3" height="3.5" fill="#333"/><rect x="849.50" y="104.5" width="1.3" height="14" fill="#333"/><rect x="854.18" y="104.5" width="1.3" height="3.5" fill="#333"/><rect x="858.86" y="104.5" width="1.3" height="3.5" fill="#333"/><rect x="863.54" y="104.5" width="1.3" height="3.5" fill="#333"/><rect x="868.22" y="104.5" width="1.3" height="3.5" fill="#333"/><rect x="872.91" y="104.5" width="1.3" height="3.5" fill="#333"/><rect x="877.59" y="104.5" width="1.3" height="3.5" fill="#333"/><rect x="882.27" y="104.5" width="1.3" height="3.5" fill="#333"/><rect x="886.95" y="104.5" width="1.3" height="14" fill="#333"/><rect x="891.63" y="104.5" width="1.3" height="3.5" fill="#333"/><rect x="896.31" y="104.5" width="1.3" height="3.5" fill="#333"/><rect x="900.99" y="104.5" width="1.3" height="3.5" fill="#333"/><rect x="905.67" y="104.5" width="1.3" height="3.5" fill="#333"/><rect x="910.36" y="104.5" width="1.3" height="3.5" fill="#333"/><rect x="915.04" y="104.5" width="1.3" height="3.5" fill="#333"/><rect x="919.72" y="104.5" width="1.3" height="3.5" fill="#333"/><rect x="924.40" y="104.5" width="1.3" height="14" fill="#333"/><rect x="929.08" y="104.5" width="1.3" height="3.5" fill="#333"/><rect x="933.76" y="104.5" width="1.3" height="3.5" fill="#333"/><rect x="938.44" y="104.5" width="1.3" height="3.5" fill="#333"/><rect x="943.12" y="104.5" width="1.3" height="3.5" fill="#333"/><rect x="947.81" y="104.5" width="1.3" height="3.5" fill="#333"/><rect x="952.49" y="104.5" width="1.3" height="3.5" fill="#333"/><rect x="957.17" y="104.5" width="1.3" height="3.5" fill="#333"/><rect x="961.85" y="104.5" width="1.3" height="14" fill="#333"/><rect x="966.53" y="104.5" width="1.3" height="3.5" fill="#333"/><rect x="971.21" y="104.5" width="1.3" height="3.5" fill="#333"/><rect x="975.89" y="104.5" width="1.3" height="3.5" fill="#333"/><rect x="980.58" y="104.5" width="1.3" height="3.5" fill="#333"/><rect x="985.26" y="104.5" width="1.3" height="3.5" fill="#333"/><rect x="989.94" y="104.5" width="1.3" height="3.5" fill="#333"/><rect x="994.62" y="104.5" width="1.3" height="3.5" fill="#333"/><rect x="999.30" y="104.5" width="1.3" height="14" fill="#333"/><rect x="1003.98" y="104.5" width="1.3" height="3.5" fill="#333"/><rect x="1008.66" y="104.5" width="1.3" height="3.5" fill="#333"/><rect x="1013.34" y="104.5" width="1.3" height="3.5" fill="#333"/><rect x="1018.02" y="104.5" width="1.3" height="3.5" fill="#333"/><rect x="1022.71" y="104.5" width="1.3" height="3.5" fill="#333"/><rect x="1027.39" y="104.5" width="1.3" height="3.5" fill="#333"/><rect x="1032.07" y="104.5" width="1.3" height="3.5" fill="#333"/><rect x="1036.75" y="104.5" width="1.3" height="14" fill="#333"/><rect x="1041.43" y="104.5" width="1.3" height="3.5" fill="#333"/><rect x="1046.11" y="104.5" width="1.3" height="3.5" fill="#333"/><rect x="1050.79" y="104.5" width="1.3" height="3.5" fill="#333"/><rect x="1055.47" y="104.5" width="1.3" height="3.5" fill="#333"/><rect x="1060.16" y="104.5" width="1.3" height="3.5" fill="#333"/><rect x="1064.84" y="104.5" width="1.3" height="3.5" fill="#333"/><rect x="1069.52" y="104.5" width="1.3" height="3.5" fill="#333"/><rect x="1074.20" y="104.5" width="1.3" height="14" fill="#333"/><rect x="1078.88" y="104.5" width="1.3" height="3.5" fill="#333"/><rect x="1083.56" y="104.5" width="1.3" height="3.5" fill="#333"/><rect x="1088.24" y="104.5" width="1.3" height="3.5" fill="#333"/><rect x="1092.92" y="104.5" width="1.3" height="3.5" fill="#333"/><rect x="1097.61" y="104.5" width="1.3" height="3.5" fill="#333"/><rect x="1102.29" y="104.5" width="1.3" height="3.5" fill="#333"/><rect x="1106.97" y="104.5" width="1.3" height="3.5" fill="#333"/><rect x="1111.65" y="104.5" width="1.3" height="14" fill="#333"/><rect x="1116.33" y="104.5" width="1.3" height="3.5" fill="#333"/><rect x="1121.01" y="104.5" width="1.3" height="3.5" fill="#333"/><rect x="1125.69" y="104.5" width="1.3" height="3.5" fill="#333"/><rect x="1130.38" y="104.5" width="1.3" height="3.5" fill="#333"/><rect x="1135.06" y="104.5" width="1.3" height="3.5" fill="#333"/><rect x="1139.74" y="104.5" width="1.3" height="3.5" fill="#333"/><rect x="1144.42" y="104.5" width="1.3" height="3.5" fill="#333"/><rect x="1149.10" y="104.5" width="1.3" height="14" fill="#333"/><rect x="1153.78" y="104.5" width="1.3" height="3.5" fill="#333"/></svg><div class="t" style="left:253.09px;top:118.00px;font-size:7.83px;color:#333;">-10</div><div class="t" style="left:290.54px;top:118.00px;font-size:7.83px;color:#333;">-9</div><div class="t" style="left:327.99px;top:118.00px;font-size:7.83px;color:#333;">-8</div><div class="t" style="left:365.44px;top:118.00px;font-size:7.83px;color:#333;">-7</div><div class="t" style="left:402.89px;top:118.00px;font-size:7.83px;color:#333;">-6</div><div class="t" style="left:440.34px;top:118.00px;font-size:7.83px;color:#333;">-5</div><div class="t" style="left:477.79px;top:118.00px;font-size:7.83px;color:#333;">-4</div><div class="t" style="left:515.24px;top:118.00px;font-size:7.83px;color:#333;">-3</div><div class="t" style="left:552.69px;top:118.00px;font-size:7.83px;color:#333;">-2</div><div class="t" style="left:590.14px;top:118.00px;font-size:7.83px;color:#333;">-1</div><div class="t" style="left:627.63px;top:118.00px;font-size:7.83px;color:#333;">0</div><div class="t" style="left:664.76px;top:118.00px;font-size:7.83px;color:#333;">1</div><div class="t" style="left:702.41px;top:118.00px;font-size:7.83px;color:#333;">2</div><div class="t" style="left:739.98px;top:118.00px;font-size:7.83px;color:#333;">3</div><div class="t" style="left:777.54px;top:118.00px;font-size:7.83px;color:#333;">4</div><div class="t" style="left:814.84px;top:118.00px;font-size:7.83px;color:#333;">5</div><div class="t" style="left:852.21px;top:118.00px;font-size:7.83px;color:#333;">6</div><div class="t" style="left:889.66px;top:118.00px;font-size:7.83px;color:#333;">7</div><div class="t" style="left:927.19px;top:118.00px;font-size:7.83px;color:#333;">8</div><div class="t" style="left:964.60px;top:118.00px;font-size:7.83px;color:#333;">9</div><div class="t" style="left:1001.81px;top:118.00px;font-size:7.83px;color:#333;">10</div><div class="t" style="left:1039.26px;top:118.00px;font-size:7.83px;color:#333;">11</div><div class="t" style="left:1076.71px;top:118.00px;font-size:7.83px;color:#333;">12</div><div class="t" style="left:1114.16px;top:118.00px;font-size:7.83px;color:#333;">13</div><svg class="a" style="left:225px;top:104px" width="25" height="454" viewBox="225 104 25 454"><rect x="225.8" y="104.20" width="12" height="1.4" fill="#333"/><rect x="225.8" y="108.89" width="3.8" height="1.4" fill="#333"/><rect x="225.8" y="113.58" width="3.8" height="1.4" fill="#333"/><rect x="225.8" y="118.26" width="3.8" height="1.4" fill="#333"/><rect x="225.8" y="122.95" width="3.8" height="1.4" fill="#333"/><rect x="225.8" y="127.64" width="3.8" height="1.4" fill="#333"/><rect x="225.8" y="132.32" width="3.8" height="1.4" fill="#333"/><rect x="225.8" y="137.01" width="3.8" height="1.4" fill="#333"/><rect x="225.8" y="141.70" width="12" height="1.4" fill="#333"/><rect x="225.8" y="146.39" width="3.8" height="1.4" fill="#333"/><rect x="225.8" y="151.07" width="3.8" height="1.4" fill="#333"/><rect x="225.8" y="155.76" width="3.8" height="1.4" fill="#333"/><rect x="225.8" y="160.45" width="3.8" height="1.4" fill="#333"/><rect x="225.8" y="165.14" width="3.8" height="1.4" fill="#333"/><rect x="225.8" y="169.82" width="3.8" height="1.4" fill="#333"/><rect x="225.8" y="174.51" width="3.8" height="1.4" fill="#333"/><rect x="225.8" y="179.20" width="12" height="1.4" fill="#333"/><rect x="225.8" y="183.89" width="3.8" height="1.4" fill="#333"/><rect x="225.8" y="188.57" width="3.8" height="1.4" fill="#333"/><rect x="225.8" y="193.26" width="3.8" height="1.4" fill="#333"/><rect x="225.8" y="197.95" width="3.8" height="1.4" fill="#333"/><rect x="225.8" y="202.64" width="3.8" height="1.4" fill="#333"/><rect x="225.8" y="207.32" width="3.8" height="1.4" fill="#333"/><rect x="225.8" y="212.01" width="3.8" height="1.4" fill="#333"/><rect x="225.8" y="216.70" width="12" height="1.4" fill="#333"/><rect x="225.8" y="221.39" width="3.8" height="1.4" fill="#333"/><rect x="225.8" y="226.07" width="3.8" height="1.4" fill="#333"/><rect x="225.8" y="230.76" width="3.8" height="1.4" fill="#333"/><rect x="225.8" y="235.45" width="3.8" height="1.4" fill="#333"/><rect x="225.8" y="240.14" width="3.8" height="1.4" fill="#333"/><rect x="225.8" y="244.82" width="3.8" height="1.4" fill="#333"/><rect x="225.8" y="249.51" width="3.8" height="1.4" fill="#333"/><rect x="225.8" y="254.20" width="12" height="1.4" fill="#333"/><rect x="225.8" y="258.89" width="3.8" height="1.4" fill="#333"/><rect x="225.8" y="263.57" width="3.8" height="1.4" fill="#333"/><rect x="225.8" y="268.26" width="3.8" height="1.4" fill="#333"/><rect x="225.8" y="272.95" width="3.8" height="1.4" fill="#333"/><rect x="225.8" y="277.64" width="3.8" height="1.4" fill="#333"/><rect x="225.8" y="282.32" width="3.8" height="1.4" fill="#333"/><rect x="225.8" y="287.01" width="3.8" height="1.4" fill="#333"/><rect x="225.8" y="291.70" width="12" height="1.4" fill="#333"/><rect x="225.8" y="296.39" width="3.8" height="1.4" fill="#333"/><rect x="225.8" y="301.07" width="3.8" height="1.4" fill="#333"/><rect x="225.8" y="305.76" width="3.8" height="1.4" fill="#333"/><rect x="225.8" y="310.45" width="3.8" height="1.4" fill="#333"/><rect x="225.8" y="315.14" width="3.8" height="1.4" fill="#333"/><rect x="225.8" y="319.82" width="3.8" height="1.4" fill="#333"/><rect x="225.8" y="324.51" width="3.8" height="1.4" fill="#333"/><rect x="225.8" y="329.20" width="12" height="1.4" fill="#333"/><rect x="225.8" y="333.89" width="3.8" height="1.4" fill="#333"/><rect x="225.8" y="338.57" width="3.8" height="1.4" fill="#333"/><rect x="225.8" y="343.26" width="3.8" height="1.4" fill="#333"/><rect x="225.8" y="347.95" width="3.8" height="1.4" fill="#333"/><rect x="225.8" y="352.64" width="3.8" height="1.4" fill="#333"/><rect x="225.8" y="357.32" width="3.8" height="1.4" fill="#333"/><rect x="225.8" y="362.01" width="3.8" height="1.4" fill="#333"/><rect x="225.8" y="366.70" width="12" height="1.4" fill="#333"/><rect x="225.8" y="371.39" width="3.8" height="1.4" fill="#333"/><rect x="225.8" y="376.07" width="3.8" height="1.4" fill="#333"/><rect x="225.8" y="380.76" width="3.8" height="1.4" fill="#333"/><rect x="225.8" y="385.45" width="3.8" height="1.4" fill="#333"/><rect x="225.8" y="390.14" width="3.8" height="1.4" fill="#333"/><rect x="225.8" y="394.82" width="3.8" height="1.4" fill="#333"/><rect x="225.8" y="399.51" width="3.8" height="1.4" fill="#333"/><rect x="225.8" y="404.20" width="12" height="1.4" fill="#333"/><rect x="225.8" y="408.89" width="3.8" height="1.4" fill="#333"/><rect x="225.8" y="413.57" width="3.8" height="1.4" fill="#333"/><rect x="225.8" y="418.26" width="3.8" height="1.4" fill="#333"/><rect x="225.8" y="422.95" width="3.8" height="1.4" fill="#333"/><rect x="225.8" y="427.64" width="3.8" height="1.4" fill="#333"/><rect x="225.8" y="432.32" width="3.8" height="1.4" fill="#333"/><rect x="225.8" y="437.01" width="3.8" height="1.4" fill="#333"/><rect x="225.8" y="441.70" width="12" height="1.4" fill="#333"/><rect x="225.8" y="446.39" width="3.8" height="1.4" fill="#333"/><rect x="225.8" y="451.07" width="3.8" height="1.4" fill="#333"/><rect x="225.8" y="455.76" width="3.8" height="1.4" fill="#333"/><rect x="225.8" y="460.45" width="3.8" height="1.4" fill="#333"/><rect x="225.8" y="465.14" width="3.8" height="1.4" fill="#333"/><rect x="225.8" y="469.82" width="3.8" height="1.4" fill="#333"/><rect x="225.8" y="474.51" width="3.8" height="1.4" fill="#333"/><rect x="225.8" y="479.20" width="12" height="1.4" fill="#333"/><rect x="225.8" y="483.89" width="3.8" height="1.4" fill="#333"/><rect x="225.8" y="488.57" width="3.8" height="1.4" fill="#333"/><rect x="225.8" y="493.26" width="3.8" height="1.4" fill="#333"/><rect x="225.8" y="497.95" width="3.8" height="1.4" fill="#333"/><rect x="225.8" y="502.64" width="3.8" height="1.4" fill="#333"/><rect x="225.8" y="507.32" width="3.8" height="1.4" fill="#333"/><rect x="225.8" y="512.01" width="3.8" height="1.4" fill="#333"/><rect x="225.8" y="516.70" width="12" height="1.4" fill="#333"/><rect x="225.8" y="521.39" width="3.8" height="1.4" fill="#333"/><rect x="225.8" y="526.08" width="3.8" height="1.4" fill="#333"/><rect x="225.8" y="530.76" width="3.8" height="1.4" fill="#333"/><rect x="225.8" y="535.45" width="3.8" height="1.4" fill="#333"/><rect x="225.8" y="540.14" width="3.8" height="1.4" fill="#333"/><rect x="225.8" y="544.83" width="3.8" height="1.4" fill="#333"/><rect x="225.8" y="549.51" width="3.8" height="1.4" fill="#333"/><rect x="225.8" y="554.20" width="12" height="1.4" fill="#333"/><rect x="235" y="104.5" width="1" height="23.5" fill="#444"/></svg><div class="t" style="left:246.50px;top:108.20px;font-size:7px;color:#333;transform:rotate(90deg);transform-origin:0 0;">0</div><div class="t" style="left:246.50px;top:145.70px;font-size:7px;color:#333;transform:rotate(90deg);transform-origin:0 0;">1</div><div class="t" style="left:246.50px;top:183.20px;font-size:7px;color:#333;transform:rotate(90deg);transform-origin:0 0;">2</div><div class="t" style="left:246.50px;top:220.70px;font-size:7px;color:#333;transform:rotate(90deg);transform-origin:0 0;">3</div><div class="t" style="left:246.50px;top:258.20px;font-size:7px;color:#333;transform:rotate(90deg);transform-origin:0 0;">4</div><div class="t" style="left:246.50px;top:295.70px;font-size:7px;color:#333;transform:rotate(90deg);transform-origin:0 0;">5</div><div class="t" style="left:246.50px;top:333.20px;font-size:7px;color:#333;transform:rotate(90deg);transform-origin:0 0;">6</div><div class="t" style="left:246.50px;top:370.70px;font-size:7px;color:#333;transform:rotate(90deg);transform-origin:0 0;">7</div><div class="t" style="left:246.50px;top:408.20px;font-size:7px;color:#333;transform:rotate(90deg);transform-origin:0 0;">8</div><div class="t" style="left:246.50px;top:445.70px;font-size:7px;color:#333;transform:rotate(90deg);transform-origin:0 0;">9</div><div class="t" style="left:246.50px;top:483.20px;font-size:7px;color:#333;transform:rotate(90deg);transform-origin:0 0;">10</div><div class="t" style="left:246.50px;top:520.70px;font-size:7px;color:#333;transform:rotate(90deg);transform-origin:0 0;">11</div><div class="a" style="left:250px;top:131.4px;width:905px;height:426.6px;background:#c0bfc0;"></div><div class="a" style="left:276px;top:132px;width:879px;height:1.2px;background:#606060;"></div><div class="a" style="left:276px;top:132px;width:1px;height:416.5px;background:#505050;"></div><div class="a" style="left:276px;top:547.5px;width:879px;height:1px;background:#505050;"></div><div class="a" style="left:629.2px;top:133.3px;width:322.8px;height:414.2px;background:#fff;"></div><svg class="a" style="left:225px;top:137px" width="14" height="41" viewBox="0 0 14 41"><path d="M0 0C4 2 8 4 11 6.5Q13.5 8.5 13.5 11V30Q13.5 32.5 11 34.5C8 37 4 39 0 41z" fill="#b6b6b6"/><path d="M9 17L6 20.5L9 24" fill="none" stroke="#fff" stroke-width="1.1"/></svg><svg class="a" style="left:1141px;top:138px" width="14" height="41" viewBox="0 0 14 41"><path d="M14 0C10 2 6 4 3 6.5Q0.8 8.5 0.8 11V30Q0.8 32.5 3 34.5C6 37 10 39 14 41z" fill="#b8b8b8"/><path d="M9.5 16.5L6.5 20L9.5 23.5" fill="none" stroke="#fff" stroke-width="1.1"/></svg><div class="a" style="left:256.9px;top:529.2px;width:12.5px;height:2.6px;background:#fff;"></div><div class="a" style="left:261.8px;top:524.2px;width:2.6px;height:12.9px;background:#fff;"></div><div class="a" style="left:256.9px;top:548px;width:12.6px;height:3px;background:#fff;"></div><div class="a" style="left:710.2px;top:299.4px;width:160.5px;height:82.1px;border:1px solid #c6d6f6;"></div><div class="t" style="left:710.32px;top:303.00px;font-size:25.36px;color:#000;transform:scaleX(1.023);transform-origin:0 0;">Emoji</div><div class="a" style="left:711px;top:355px;width:1px;height:24px;background:#777;"></div><div class="a" style="left:1155px;top:104.5px;width:45px;height:543.5px;background:#fff;"></div><div class="a" style="left:1154.8px;top:104.6px;width:45.2px;height:34px;background:linear-gradient(90deg,#4a8cf6 0%,#2a5ef2 50%,#0a22ee 100%);"></div><div class="t" style="left:1169.11px;top:119.00px;font-size:10.72px;color:#fff;transform:scaleX(1.040);transform-origin:0 0;-webkit-text-stroke:0.35px #fff;">RG</div><svg class="a" style="left:1155px;top:140px" width="45" height="340" viewBox="1155 140 45 340"><rect x="1170.2" y="152.6" width="11.4" height="11" rx="1.8" fill="#fff" stroke="#5a5a5a" stroke-width="1.5"/><rect x="1177" y="159.4" width="8.6" height="8.4" rx="1.6" fill="#fff" stroke="#5a5a5a" stroke-width="1.5"/><rect x="1171.3" y="199.8" width="15" height="10.6" rx="1" fill="#fff" stroke="#5a5a5a" stroke-width="1.4"/><rect x="1169.2" y="197.4" width="15" height="10.6" rx="1" fill="#fff" stroke="#5a5a5a" stroke-width="1.4"/><rect x="1167.3" y="195.2" width="15" height="10.6" rx="1" fill="#fff" stroke="#5a5a5a" stroke-width="1.4"/><path d="M1172.2 197.6v5.6h4.8" fill="none" stroke="#5a5a5a" stroke-width="1.7"/><path d="M1177.5 237.8c-2.2 2.2-3.2 5-3.2 8s1.2 5.5 3.2 7.5c2-2 3.2-4.5 3.2-7.5s-1-5.8-3.2-8z M1174.6 244.5c-2-1.8-4-2.7-6-2.7-.2 4.5 2.2 9 8.9 11.5 M1180.4 244.5c2-1.8 4-2.7 6-2.7.2 4.5-2.2 9-8.9 11.5 M1171.5 248.5c-1.8-.3-3.2 0-3.8.8 2 3 5 4.3 9.8 4 M1183.5 248.5c1.8-.3 3.2 0 3.8.8-2 3-5 4.3-9.8 4" fill="none" stroke="#5a5a5a" stroke-width="1.3"/><path d="M1168.5 297.3h18.5c2.3 0 3.5-1.8 3.5-3.8s-1.5-3.8-3.8-3.8c-.2-4.2-3.2-7-7.3-7-3.3 0-5.8 1.8-6.8 4.8-2.8.2-5.2 2.2-5.2 5s1.1 4.8 1.1 4.8z" fill="none" stroke="#5a5a5a" stroke-width="1.5"/><text x="1177.6" y="294.6" font-size="6" font-weight="bold" fill="#5a5a5a" text-anchor="middle" font-family="Liberation Sans">.com</text><rect x="1170.1" y="324.4" width="15.3" height="15.2" rx="1.5" fill="none" stroke="#5a5a5a" stroke-width="1.6"/><text x="1177.8" y="336.3" font-size="11" font-weight="bold" fill="#5a5a5a" text-anchor="middle" font-family="Liberation Sans">H</text><rect x="1169.5" y="366.6" width="16.8" height="15.2" rx="1.5" fill="#5a5a5a"/><rect x="1170.8" y="368.2" width="14.2" height="2.3" fill="#fff"/><rect x="1172.5" y="367.4" width="4" height="2.5" fill="#ddd"/><rect x="1170.8" y="379.2" width="14.2" height="0.9" fill="#fff"/><circle cx="1178" cy="374.6" r="3.6" fill="#fff"/><circle cx="1178" cy="374.6" r="2.3" fill="#555"/><rect x="1170.1" y="409.8" width="15.3" height="15.4" rx="1.5" fill="none" stroke="#5a5a5a" stroke-width="1.6"/><text x="1177.8" y="421.8" font-size="11" font-weight="bold" fill="#5a5a5a" text-anchor="middle" font-family="Liberation Sans">P</text><path d="M1177.5 453.2l2.5 5.2 5.6.6-4.2 3.8 1.2 5.6-5.1-2.8-5.1 2.8 1.2-5.6-4.2-3.8 5.6-.6z" fill="none" stroke="#5a5a5a" stroke-width="1.4"/><path d="M1170 454l-1-1M1185 454l1-1M1177.5 470.5v1" stroke="#5a5a5a" stroke-width="1"/></svg><div class="a" style="left:225.8px;top:557.7px;width:929.2px;height:90.3px;background:#e8e8e8;"></div><div class="a" style="left:243.6px;top:563.6px;width:63.6px;height:90px;background:#fff;border:1px solid #4646f2;box-shadow:0 0 0 0.6px #f4f0d8;"></div><div class="t" style="left:260.5px;top:600px;font-size:4.6px;color:#333;">Emoj</div><div class="t" style="left:253.45px;top:639.00px;font-size:10.87px;color:#333;transform:scaleX(0.677);transform-origin:0 0;">1</div><div class="a" style="left:880.3px;top:288px;width:265.6px;height:265px;background:#323232;border:1px solid #000;box-shadow:0 0 5px rgba(0,0,0,0.15),1px 1px 2px rgba(0,0,0,0.25);"></div><div class="a" style="left:881.3px;top:289px;width:263.6px;height:74px;background:#131515;"></div><div class="t" style="left:892.54px;top:305.00px;font-size:12.75px;color:#c0c0c0;transform:scaleX(0.937);transform-origin:0 0;">Emoji - Keep typing to find an emoji</div><svg class="a" style="left:1127px;top:295px" width="14" height="12" viewBox="0 0 14 12"><path d="M2 2l8.6 8.6M10.6 2L2 10.6" stroke="#e8e8e8" stroke-width="1.2"/></svg><svg class="a" style="left:893px;top:332px" width="90" height="26" viewBox="893 332 90 26"><circle cx="902.2" cy="341.4" r="6.3" fill="none" stroke="#a9c80a" stroke-width="1.2"/><circle cx="900" cy="339.6" r="0.9" fill="#a9c80a"/><circle cx="904.4" cy="339.6" r="0.9" fill="#a9c80a"/><path d="M899 342.8q3.2 3 6.4 0" fill="none" stroke="#a9c80a" stroke-width="1.1"/><rect x="895" y="354.8" width="14.4" height="1.8" fill="#a9c80a"/></svg><div class="t" style="left:926.03px;top:333.00px;font-size:13.19px;color:#e8e8e8;transform:scaleX(1.240);transform-origin:0 0;">;-)</div><div class="t" style="left:958.26px;top:335.00px;font-size:16.52px;color:#e8e8e8;transform:scaleX(1.120);transform-origin:0 0;">Ω</div><div class="a" style="left:886.9px;top:363px;width:31.3px;height:30.5px;background:#6a7530;"></div><div class="a" style="left:980.5px;top:520px;width:31.5px;height:27.5px;background:#454545;"></div><div class="a" style="left:1020.7px;top:546.2px;width:13.1px;height:2.6px;background:#a9c80a;"></div><svg class="a" style="left:891.1px;top:367.7px;filter:drop-shadow(0.8px 0 0 #000) drop-shadow(-0.8px 0 0 #000) drop-shadow(0 0.8px 0 #000) drop-shadow(0 -0.8px 0 #000);" width="23" height="23" viewBox="0 0 20 20"><circle cx="9" cy="7.5" r="4.6" fill="#f03c1c" stroke="#111" stroke-width="1"/><path d="M9 12.3c0 2 1 2.6 2.5 2.3s2.5.5 3.5 2.5" fill="none" stroke="#aaa" stroke-width="1.1"/></svg><svg class="a" style="left:922.0px;top:367.7px;filter:drop-shadow(0.8px 0 0 #000) drop-shadow(-0.8px 0 0 #000) drop-shadow(0 0.8px 0 #000) drop-shadow(0 -0.8px 0 #000);" width="23" height="23" viewBox="0 0 20 20"><g stroke="#7a78d8" stroke-width="1.1"><path d="M10 8.5L17.0 8.5"/><path d="M10 8.5L15.0 13.4"/><path d="M10 8.5L10.0 15.5"/><path d="M10 8.5L5.1 13.5"/><path d="M10 8.5L3.0 8.5"/><path d="M10 8.5L5.0 3.6"/><path d="M10 8.5L10.0 1.5"/><path d="M10 8.5L14.9 3.5"/></g><circle cx="10" cy="8.5" r="2.2" fill="#e0a0e0" stroke="#111" stroke-width="0.6"/><path d="M9.3 11v6h1.4v-6z" fill="#eee"/></svg><svg class="a" style="left:953.3px;top:367.7px;filter:drop-shadow(0.8px 0 0 #000) drop-shadow(-0.8px 0 0 #000) drop-shadow(0 0.8px 0 #000) drop-shadow(0 -0.8px 0 #000);" width="23" height="23" viewBox="0 0 20 20"><g stroke="#e8b800" stroke-width="1.2"><path d="M10 10L17.2 10.0"/><path d="M10 10L16.2 13.6"/><path d="M10 10L13.6 16.2"/><path d="M10 10L10.0 17.2"/><path d="M10 10L6.4 16.2"/><path d="M10 10L3.8 13.6"/><path d="M10 10L2.8 10.0"/><path d="M10 10L3.8 6.4"/><path d="M10 10L6.4 3.8"/><path d="M10 10L10.0 2.8"/><path d="M10 10L13.6 3.8"/><path d="M10 10L16.3 6.4"/></g><circle cx="10" cy="10" r="2" fill="#fff080"/></svg><svg class="a" style="left:984.8px;top:367.7px;filter:drop-shadow(0.8px 0 0 #000) drop-shadow(-0.8px 0 0 #000) drop-shadow(0 0.8px 0 #000) drop-shadow(0 -0.8px 0 #000);" width="23" height="23" viewBox="0 0 20 20"><path d="M3.5 15.5l10-10 2.5 2.5-10 10z" fill="#f04a1c" stroke="#111" stroke-width="1"/><circle cx="15.5" cy="4.5" r="1.4" fill="#fff"/></svg><svg class="a" style="left:1016.3px;top:367.7px;filter:drop-shadow(0.8px 0 0 #000) drop-shadow(-0.8px 0 0 #000) drop-shadow(0 0.8px 0 #000) drop-shadow(0 -0.8px 0 #000);" width="23" height="23" viewBox="0 0 20 20"><path d="M11.5 3l1.6 5.4 4.4 1.6-4.4 1.6-1.6 5.4-1.6-5.4-4.4-1.6 4.4-1.6z" fill="#ffe800" stroke="#111" stroke-width="0.5"/><path d="M4.5 5l.8 2 2 .8-2 .8-.8 2-.8-2-2-.8 2-.8z" fill="#4ab0f0"/><path d="M6 13l.7 1.6 1.6.7-1.6.7-.7 1.6-.7-1.6-1.6-.7 1.6-.7z" fill="#f0a0c8"/></svg><svg class="a" style="left:1047.4px;top:367.7px;filter:drop-shadow(0.8px 0 0 #000) drop-shadow(-0.8px 0 0 #000) drop-shadow(0 0.8px 0 #000) drop-shadow(0 -0.8px 0 #000);" width="23" height="23" viewBox="0 0 20 20"><path d="M3.5 16.5l4-9 5.5 5.5z" fill="#f8c830" stroke="#111" stroke-width="0.9"/><path d="M9 5l1.5-2.5M12 6l2-2M14 9l3-.5M13.5 12l2.5 1" stroke="#3a9ae0" stroke-width="1.1"/><path d="M14 9.5l2 2.5 1.5-2z" fill="#e84020"/></svg><svg class="a" style="left:1078.4px;top:367.7px;filter:drop-shadow(0.8px 0 0 #000) drop-shadow(-0.8px 0 0 #000) drop-shadow(0 0.8px 0 #000) drop-shadow(0 -0.8px 0 #000);" width="23" height="23" viewBox="0 0 20 20"><path d="M10 4c-4 0-7 2-7 5s3 7 7 8c4-1 7-5 7-8s-3-5-7-5z" fill="#f0c040" stroke="#111" stroke-width="0.9"/><path d="M10 4v13" stroke="#222" stroke-width="1"/><path d="M6 9c2 3 6 3 8 0M6 13c2 1 6 1 8 0" fill="none" stroke="#1c3ca0" stroke-width="1.5"/><circle cx="10" cy="3.5" r="1" fill="#ddd"/></svg><svg class="a" style="left:1109.7px;top:367.7px;filter:drop-shadow(0.8px 0 0 #000) drop-shadow(-0.8px 0 0 #000) drop-shadow(0 0.8px 0 #000) drop-shadow(0 -0.8px 0 #000);" width="23" height="23" viewBox="0 0 20 20"><ellipse cx="10" cy="11" rx="7" ry="6" fill="#f06a10" stroke="#111" stroke-width="0.9"/><path d="M8.5 4.5l2 1.5 2-2" fill="#3a9a30" stroke="#3a9a30" stroke-width="1.4"/><path d="M6 9.5l1.5-1 1.5 1M11 9.5l1.5-1 1.5 1M6 12.5l1.5 2 1.5-1.5 1.5 1.5 1.5-1.5 1.5 1.5 1.5-2" fill="none" stroke="#111" stroke-width="1"/></svg><svg class="a" style="left:891.1px;top:399.5px;filter:drop-shadow(0.8px 0 0 #000) drop-shadow(-0.8px 0 0 #000) drop-shadow(0 0.8px 0 #000) drop-shadow(0 -0.8px 0 #000);" width="23" height="23" viewBox="0 0 20 20"><path d="M10 2.5l6.5 14h-13z" fill="#3aa030" stroke="#111" stroke-width="0.9"/><circle cx="10" cy="3" r="1.2" fill="#ffd000"/><circle cx="8" cy="9" r="0.9" fill="#f04020"/><circle cx="11.5" cy="12" r="0.9" fill="#2080f0"/><circle cx="7.5" cy="14" r="0.9" fill="#ffd000"/><path d="M9 16.5h2v1.5h-2z" fill="#a04020"/></svg><svg class="a" style="left:922.0px;top:399.5px;filter:drop-shadow(0.8px 0 0 #000) drop-shadow(-0.8px 0 0 #000) drop-shadow(0 0.8px 0 #000) drop-shadow(0 -0.8px 0 #000);" width="23" height="23" viewBox="0 0 20 20"><path d="M8.5 3v14.5M8.5 7l3-3M8.5 10l-2.5-3" stroke="#40b030" stroke-width="1.8" fill="none"/><path d="M10 10l4 2-2 1.5z" fill="#e84020"/></svg><svg class="a" style="left:953.3px;top:399.5px;filter:drop-shadow(0.8px 0 0 #000) drop-shadow(-0.8px 0 0 #000) drop-shadow(0 0.8px 0 #000) drop-shadow(0 -0.8px 0 #000);" width="23" height="23" viewBox="0 0 20 20"><path d="M7 12l1-8 1 8M10 12l1-9 1 9M12.5 12l1-6 .8 6" fill="#e8e040" stroke="#60a030" stroke-width="0.8"/><path d="M3 11.5c2-2 4-2 7-2s5 0 7 2z" fill="#2a8a20"/><path d="M5 12h10l-1 5.5h-8z" fill="#f8b830" stroke="#111" stroke-width="0.9"/></svg><svg class="a" style="left:984.8px;top:399.5px;filter:drop-shadow(0.8px 0 0 #000) drop-shadow(-0.8px 0 0 #000) drop-shadow(0 0.8px 0 #000) drop-shadow(0 -0.8px 0 #000);" width="23" height="23" viewBox="0 0 20 20"><rect x="3.5" y="6" width="6" height="11" rx="3" fill="#2a6ae0" stroke="#111" stroke-width="0.8"/><rect x="10.5" y="6" width="6" height="11" rx="3" fill="#e83a20" stroke="#111" stroke-width="0.8"/><circle cx="6.5" cy="5" r="2" fill="#f4f4f4" stroke="#111" stroke-width="0.7"/><circle cx="13.5" cy="5" r="2" fill="#f4f4f4" stroke="#111" stroke-width="0.7"/></svg><svg class="a" style="left:1016.3px;top:399.5px;filter:drop-shadow(0.8px 0 0 #000) drop-shadow(-0.8px 0 0 #000) drop-shadow(0 0.8px 0 #000) drop-shadow(0 -0.8px 0 #000);" width="23" height="23" viewBox="0 0 20 20"><path d="M3.5 2.5v16" stroke="#ddd" stroke-width="1.4"/><path d="M4.5 4h11l2 2.5-2 2.5h-11z" fill="#3ab8f0" stroke="#111" stroke-width="0.6"/><path d="M4.5 10h11l2 2.5-2 2.5h-11z" fill="#f05a20" stroke="#111" stroke-width="0.6"/></svg><svg class="a" style="left:1047.4px;top:399.5px;filter:drop-shadow(0.8px 0 0 #000) drop-shadow(-0.8px 0 0 #000) drop-shadow(0 0.8px 0 #000) drop-shadow(0 -0.8px 0 #000);" width="23" height="23" viewBox="0 0 20 20"><circle cx="8.5" cy="5.5" r="3.2" fill="#40b8f8" stroke="#111" stroke-width="0.8"/><path d="M7.5 9l4.5 8" stroke="#f0f0f0" stroke-width="2.6"/><path d="M8.5 11l1 2M10.5 14l.5 1" stroke="#e06060" stroke-width="0.8"/></svg><svg class="a" style="left:1078.4px;top:399.5px;filter:drop-shadow(0.8px 0 0 #000) drop-shadow(-0.8px 0 0 #000) drop-shadow(0 0.8px 0 #000) drop-shadow(0 -0.8px 0 #000);" width="23" height="23" viewBox="0 0 20 20"><path d="M4 3.5c3 0 6 2 6 5" stroke="#d0b090" stroke-width="1.6" fill="none"/><path d="M4 8c2 2 4 5 5 8M6 10c2 3 3 5 4 6" stroke="#40b030" stroke-width="1.3" fill="none"/><circle cx="12.5" cy="11" r="3.8" fill="#f8c830" stroke="#111" stroke-width="0.6"/><path d="M10 17l2.5-3 2.5 3z" fill="#e8e0d0"/></svg><svg class="a" style="left:1109.7px;top:399.5px;filter:drop-shadow(0.8px 0 0 #000) drop-shadow(-0.8px 0 0 #000) drop-shadow(0 0.8px 0 #000) drop-shadow(0 -0.8px 0 #000);" width="23" height="23" viewBox="0 0 20 20"><rect x="4.5" y="3" width="11" height="14.5" fill="#e81e28" stroke="#111" stroke-width="0.9"/><circle cx="10" cy="7.5" r="1.6" fill="#ffc020"/></svg><svg class="a" style="left:891.1px;top:431.0px;filter:drop-shadow(0.8px 0 0 #000) drop-shadow(-0.8px 0 0 #000) drop-shadow(0 0.8px 0 #000) drop-shadow(0 -0.8px 0 #000);" width="23" height="23" viewBox="0 0 20 20"><path d="M10 9L3 5v9zM10 9l7-4v9z" fill="#f050b0" stroke="#111" stroke-width="0.8"/><path d="M9 9l-3 7M11 9l3 7" stroke="#f050b0" stroke-width="1.6"/><circle cx="10" cy="9" r="1.6" fill="#f8a0d8"/></svg><svg class="a" style="left:922.0px;top:431.0px;filter:drop-shadow(0.8px 0 0 #000) drop-shadow(-0.8px 0 0 #000) drop-shadow(0 0.8px 0 #000) drop-shadow(0 -0.8px 0 #000);" width="23" height="23" viewBox="0 0 20 20"><rect x="3.5" y="7.5" width="13" height="9.5" fill="#f8c820" stroke="#111" stroke-width="0.9"/><rect x="3" y="6" width="14" height="3" fill="#f8d840" stroke="#111" stroke-width="0.6"/><path d="M10 6v11" stroke="#e84020" stroke-width="1.8"/><path d="M10 6l-3-3M10 6l3-3" stroke="#e84020" stroke-width="1.2"/></svg><svg class="a" style="left:953.3px;top:431.0px;filter:drop-shadow(0.8px 0 0 #000) drop-shadow(-0.8px 0 0 #000) drop-shadow(0 0.8px 0 #000) drop-shadow(0 -0.8px 0 #000);" width="23" height="23" viewBox="0 0 20 20"><path d="M10 15l-3.5 3M10 15l3.5 3" stroke="#f4a0c8" stroke-width="1.6"/><path d="M10 3.5c-2 0-3 1.5-3 3 0 2 3 6 6.5 10M10 3.5c2 0 3 1.5 3 3 0 2-3 6-6.5 10" fill="none" stroke="#f4a0c8" stroke-width="1.8"/></svg><svg class="a" style="left:984.8px;top:431.0px;filter:drop-shadow(0.8px 0 0 #000) drop-shadow(-0.8px 0 0 #000) drop-shadow(0 0.8px 0 #000) drop-shadow(0 -0.8px 0 #000);" width="23" height="23" viewBox="0 0 20 20"><rect x="3" y="6" width="14.5" height="9" fill="#888" stroke="#111" stroke-width="0.9"/><path d="M3 7.2h14.5M3 13.8h14.5" stroke="#eee" stroke-width="0.7" stroke-dasharray="1 1"/><path d="M10.2 8v5" stroke="#222" stroke-width="0.8"/></svg><svg class="a" style="left:1016.3px;top:431.0px;filter:drop-shadow(0.8px 0 0 #000) drop-shadow(-0.8px 0 0 #000) drop-shadow(0 0.8px 0 #000) drop-shadow(0 -0.8px 0 #000);" width="23" height="23" viewBox="0 0 20 20"><path d="M3 6.5h14.5v2.5a1.5 1.5 0 0 0 0 3v2.5h-14.5v-2.5a1.5 1.5 0 0 0 0-3z" fill="#f8a830" stroke="#111" stroke-width="0.9"/><rect x="6" y="8" width="8.5" height="5" fill="none" stroke="#e07820" stroke-width="0.6"/></svg><svg class="a" style="left:1047.4px;top:431.0px;filter:drop-shadow(0.8px 0 0 #000) drop-shadow(-0.8px 0 0 #000) drop-shadow(0 0.8px 0 #000) drop-shadow(0 -0.8px 0 #000);" width="23" height="23" viewBox="0 0 20 20"><path d="M3 6.5h14.5v8h-14.5z" fill="#50c8f8" stroke="#111" stroke-width="0.9"/><path d="M13 7v7" stroke="#2090d0" stroke-width="0.6" stroke-dasharray="1 1"/><rect x="5" y="9" width="6" height="3" fill="#80d8f8"/></svg><svg class="a" style="left:1078.4px;top:431.0px;filter:drop-shadow(0.8px 0 0 #000) drop-shadow(-0.8px 0 0 #000) drop-shadow(0 0.8px 0 #000) drop-shadow(0 -0.8px 0 #000);" width="23" height="23" viewBox="0 0 20 20"><path d="M11 2.5v16" stroke="#c8a020" stroke-width="1.2"/><path d="M4 9c1-2 3-3 5-3l3 .5 2 1.5-1 2 3 2-1 2-3-1.5-3 1-1.5 3-1-1 1-3-2-1z" fill="#f8f8f8" stroke="#111" stroke-width="0.7"/><path d="M7 8h4" stroke="#2a70e0" stroke-width="1"/></svg><svg class="a" style="left:1109.7px;top:431.0px;filter:drop-shadow(0.8px 0 0 #000) drop-shadow(-0.8px 0 0 #000) drop-shadow(0 0.8px 0 #000) drop-shadow(0 -0.8px 0 #000);" width="23" height="23" viewBox="0 0 20 20"><circle cx="10" cy="9" r="6.5" fill="none" stroke="#f0f0f0" stroke-width="1.1"/><circle cx="10" cy="9" r="3" fill="none" stroke="#ddd" stroke-width="0.7"/><path d="M10 9L16.5 9.0" stroke="#ccc" stroke-width="0.6"/><path d="M10 9L14.6 13.6" stroke="#ccc" stroke-width="0.6"/><path d="M10 9L10.0 15.5" stroke="#ccc" stroke-width="0.6"/><path d="M10 9L5.4 13.6" stroke="#ccc" stroke-width="0.6"/><path d="M10 9L3.5 9.0" stroke="#ccc" stroke-width="0.6"/><path d="M10 9L5.4 4.4" stroke="#ccc" stroke-width="0.6"/><path d="M10 9L10.0 2.5" stroke="#ccc" stroke-width="0.6"/><path d="M10 9L14.6 4.4" stroke="#ccc" stroke-width="0.6"/><circle cx="10" cy="9" r="1" fill="#e06030"/><path d="M7 17l3-8 3 8" fill="none" stroke="#ccc" stroke-width="0.8"/></svg><svg class="a" style="left:891.1px;top:462.5px;filter:drop-shadow(0.8px 0 0 #000) drop-shadow(-0.8px 0 0 #000) drop-shadow(0 0.8px 0 #000) drop-shadow(0 -0.8px 0 #000);" width="23" height="23" viewBox="0 0 20 20"><path d="M3 12c4 0 6 2 9-4l3-6" fill="none" stroke="#f0f0f0" stroke-width="1.6"/><path d="M4.5 17v-4M7 17v-4M9.5 17v-5M12 17v-7M14.5 17v-11" stroke="#e02020" stroke-width="1.5"/><path d="M12.5 4l2-2.5 1.5 1" stroke="#e8c040" stroke-width="1.4"/></svg><svg class="a" style="left:922.0px;top:462.5px;filter:drop-shadow(0.8px 0 0 #000) drop-shadow(-0.8px 0 0 #000) drop-shadow(0 0.8px 0 #000) drop-shadow(0 -0.8px 0 #000);" width="23" height="23" viewBox="0 0 20 20"><path d="M10 3.5l-7 7v7h14v-7z" fill="#f8f8f8" stroke="#111" stroke-width="0.9"/><path d="M6.5 7.5l-1 10M10 4v13.5M13.5 7.5l1 10" stroke="#e02020" stroke-width="1.6"/><path d="M10 3.5l2-1.5" stroke="#40b0f0" stroke-width="1.4"/></svg><svg class="a" style="left:953.3px;top:462.5px;filter:drop-shadow(0.8px 0 0 #000) drop-shadow(-0.8px 0 0 #000) drop-shadow(0 0.8px 0 #000) drop-shadow(0 -0.8px 0 #000);" width="23" height="23" viewBox="0 0 20 20"><path d="M2.5 3h7.5v6c0 3-2 5-3.8 5s-3.7-2-3.7-5z" fill="#38b0f0" stroke="#111" stroke-width="0.8"/><path d="M9 7h8.5v5.5c0 3-2 5-4.2 5s-4.3-2-4.3-5z" fill="#f8c820" stroke="#111" stroke-width="0.8"/><path d="M16 3l1.5 4" stroke="#e02020" stroke-width="1.4"/><path d="M3 11l-.5 5" stroke="#e02020" stroke-width="1.2"/></svg><svg class="a" style="left:984.8px;top:462.5px;filter:drop-shadow(0.8px 0 0 #000) drop-shadow(-0.8px 0 0 #000) drop-shadow(0 0.8px 0 #000) drop-shadow(0 -0.8px 0 #000);" width="23" height="23" viewBox="0 0 20 20"><rect x="3" y="4.5" width="14.5" height="12" fill="#f0a020" stroke="#111" stroke-width="0.9"/><rect x="5" y="6.5" width="10.5" height="8" fill="#80c8f0"/><path d="M5 14.5l4-4 3 3 3.5-3v4z" fill="#50a040"/><circle cx="8.5" cy="10" r="1.8" fill="#e84030"/></svg><svg class="a" style="left:1016.3px;top:462.5px;filter:drop-shadow(0.8px 0 0 #000) drop-shadow(-0.8px 0 0 #000) drop-shadow(0 0.8px 0 #000) drop-shadow(0 -0.8px 0 #000);" width="23" height="23" viewBox="0 0 20 20"><path d="M10 3.5c-4.5 0-7 3-7 6.5 0 4 3 6.5 5.5 6.5 1.5 0 1.5-1 1-2s0-2 1.5-2h2c2 0 4-1 4-3.5 0-3-3-5.5-7-5.5z" fill="#f8c020" stroke="#111" stroke-width="0.9"/><circle cx="6.5" cy="8.5" r="1.2" fill="#40a030"/><circle cx="9.5" cy="6.5" r="1.2" fill="#e02020"/><circle cx="13" cy="9.5" r="1.2" fill="#2050e0"/><circle cx="7" cy="13.5" r="1.2" fill="#fff"/></svg><svg class="a" style="left:1047.4px;top:462.5px;filter:drop-shadow(0.8px 0 0 #000) drop-shadow(-0.8px 0 0 #000) drop-shadow(0 0.8px 0 #000) drop-shadow(0 -0.8px 0 #000);" width="23" height="23" viewBox="0 0 20 20"><rect x="7" y="3.5" width="9" height="2.5" rx="1" fill="#f0d0b0" stroke="#111" stroke-width="0.7"/><rect x="7" y="14.5" width="9" height="2.5" rx="1" fill="#f0d0b0" stroke="#111" stroke-width="0.7"/><rect x="8" y="6" width="7" height="8.5" fill="#2a70e0" stroke="#111" stroke-width="0.6"/><path d="M8 14l-5 2.5" stroke="#2a70e0" stroke-width="1"/></svg><svg class="a" style="left:1078.4px;top:462.5px;filter:drop-shadow(0.8px 0 0 #000) drop-shadow(-0.8px 0 0 #000) drop-shadow(0 0.8px 0 #000) drop-shadow(0 -0.8px 0 #000);" width="23" height="23" viewBox="0 0 20 20"><circle cx="9.5" cy="9" r="6" fill="#3aa830" stroke="#111" stroke-width="0.8"/><path d="M5 7c3 0 6 1 8 4M5.5 10c2 0 5 1 6.5 4M8 4c2 1 4 3 5 6" fill="none" stroke="#90e080" stroke-width="0.6"/><path d="M13 14c1 2 2 2 4 3" fill="none" stroke="#3aa830" stroke-width="1.3"/></svg><svg class="a" style="left:1109.7px;top:462.5px;filter:drop-shadow(0.8px 0 0 #000) drop-shadow(-0.8px 0 0 #000) drop-shadow(0 0.8px 0 #000) drop-shadow(0 -0.8px 0 #000);" width="23" height="23" viewBox="0 0 20 20"><path d="M2.5 5h2.5l2 8h8.5l1.5-6h-11" fill="none" stroke="#f0f0f0" stroke-width="1.4"/><path d="M7 9h9.5M16 7l2-4" stroke="#f0f0f0" stroke-width="1"/><circle cx="8" cy="15.5" r="1.2" fill="#f0f0f0"/><circle cx="14" cy="15.5" r="1.2" fill="#f0f0f0"/><circle cx="18" cy="3" r="0.9" fill="#e06030"/></svg><svg class="a" style="left:891.1px;top:493.5px;filter:drop-shadow(0.8px 0 0 #000) drop-shadow(-0.8px 0 0 #000) drop-shadow(0 0.8px 0 #000) drop-shadow(0 -0.8px 0 #000);" width="23" height="23" viewBox="0 0 20 20"><path d="M3 8l2-4M17 8l-2-4" stroke="#111" stroke-width="1.2"/><path d="M2.5 9h6.5v3c0 1.5-1.2 2.5-3.2 2.5s-3.3-1-3.3-2.5zM11 9h6.5v3c0 1.5-1.2 2.5-3.2 2.5s-3.3-1-3.3-2.5z" fill="#30b8f8" stroke="#111" stroke-width="0.9"/><path d="M9 9.5h2" stroke="#111" stroke-width="1"/></svg><svg class="a" style="left:922.0px;top:493.5px;filter:drop-shadow(0.8px 0 0 #000) drop-shadow(-0.8px 0 0 #000) drop-shadow(0 0.8px 0 #000) drop-shadow(0 -0.8px 0 #000);" width="23" height="23" viewBox="0 0 20 20"><path d="M3 8l2-4M17 8l-2-4" stroke="#777" stroke-width="1"/><path d="M2.5 9h6.5v3c0 1.5-1.2 2.5-3.2 2.5s-3.3-1-3.3-2.5zM11 9h6.5v3c0 1.5-1.2 2.5-3.2 2.5s-3.3-1-3.3-2.5z" fill="#2a2a2a" stroke="#777" stroke-width="1"/><path d="M9 9.5h2" stroke="#777" stroke-width="1"/></svg><svg class="a" style="left:953.3px;top:493.5px;filter:drop-shadow(0.8px 0 0 #000) drop-shadow(-0.8px 0 0 #000) drop-shadow(0 0.8px 0 #000) drop-shadow(0 -0.8px 0 #000);" width="23" height="23" viewBox="0 0 20 20"><path d="M4 4h3l3 6 3-6h3l1 13h-13z" fill="#f86a30" stroke="#111" stroke-width="0.8"/><path d="M3.5 11h13M3.5 14h13" stroke="#f8d8b0" stroke-width="1"/></svg><svg class="a" style="left:1016.3px;top:493.5px;filter:drop-shadow(0.8px 0 0 #000) drop-shadow(-0.8px 0 0 #000) drop-shadow(0 0.8px 0 #000) drop-shadow(0 -0.8px 0 #000);" width="23" height="23" viewBox="0 0 20 20"><path d="M7 3l-4 3-1 10h3.5v2h9v-2h3.5l-1-10-4-3-3 3z" fill="#f8f8f8" stroke="#111" stroke-width="0.8"/><path d="M10 6v12" stroke="#999" stroke-width="0.6"/></svg><svg class="a" style="left:1047.4px;top:493.5px;filter:drop-shadow(0.8px 0 0 #000) drop-shadow(-0.8px 0 0 #000) drop-shadow(0 0.8px 0 #000) drop-shadow(0 -0.8px 0 #000);" width="23" height="23" viewBox="0 0 20 20"><path d="M7 3l-4 3-.5 11h15l-.5-11-4-3-3 4z" fill="#2a2a2a" stroke="#555" stroke-width="0.8"/><path d="M10 7v10M7 3l3 6 3-6" fill="none" stroke="#555" stroke-width="0.6"/></svg><svg class="a" style="left:1078.4px;top:493.5px;filter:drop-shadow(0.8px 0 0 #000) drop-shadow(-0.8px 0 0 #000) drop-shadow(0 0.8px 0 #000) drop-shadow(0 -0.8px 0 #000);" width="23" height="23" viewBox="0 0 20 20"><path d="M3 5h14v12h-14z" fill="#3a98e8" stroke="#111" stroke-width="0.8"/><path d="M7 4l3 2.5 3-2.5" fill="#80c8f8"/><path d="M9 7h2l1 10h-4z" fill="#e83a20"/></svg><svg class="a" style="left:1109.7px;top:493.5px;filter:drop-shadow(0.8px 0 0 #000) drop-shadow(-0.8px 0 0 #000) drop-shadow(0 0.8px 0 #000) drop-shadow(0 -0.8px 0 #000);" width="23" height="23" viewBox="0 0 20 20"><path d="M6.5 3.5l-4 3 2 3 1.5-1v9.5h8v-9.5l1.5 1 2-3-4-3c-.5 1.5-1.5 2-3.5 2s-3-.5-3.5-2z" fill="#f8f8f8" stroke="#111" stroke-width="0.8"/><path d="M3 6.5h14M6 10h8M6 13h8M6 16h8" stroke="#e83a20" stroke-width="1.5"/></svg><svg class="a" style="left:892.1px;top:521.5px" width="21" height="21" viewBox="0 0 20 20"><circle cx="11.5" cy="8" r="4.2" fill="none" stroke="#e8e8e8" stroke-width="1.1"/><path d="M8.6 11L3.5 16.5" stroke="#e8e8e8" stroke-width="1.2"/></svg><svg class="a" style="left:923.0px;top:521.5px" width="21" height="21" viewBox="0 0 20 20"><circle cx="10" cy="10" r="6" fill="none" stroke="#e8e8e8" stroke-width="1.2"/><path d="M9.5 6.5v4h3" fill="none" stroke="#e8e8e8" stroke-width="1.1"/></svg><svg class="a" style="left:954.3px;top:521.5px" width="21" height="21" viewBox="0 0 20 20"><circle cx="10" cy="10" r="6" fill="none" stroke="#e8e8e8" stroke-width="1.2"/><circle cx="8" cy="8.5" r="0.9" fill="#e8e8e8"/><circle cx="12" cy="8.5" r="0.9" fill="#e8e8e8"/><path d="M7 11.5c1 2.5 5 2.5 6 0z" fill="#e8e8e8"/></svg><svg class="a" style="left:985.8px;top:521.5px" width="21" height="21" viewBox="0 0 20 20"><path d="M4.5 16c0-7 2-10 5.5-10s5.5 3 5.5 10z" fill="none" stroke="#ddd" stroke-width="1"/><circle cx="10" cy="11" r="3.2" fill="none" stroke="#ddd" stroke-width="0.9"/></svg><svg class="a" style="left:1017.3px;top:521.5px" width="21" height="21" viewBox="0 0 20 20"><circle cx="9" cy="7.5" r="3.8" fill="none" stroke="#a9c80a" stroke-width="1.1"/><path d="M9 11.5c-.5 2 1 2.5 2.5 2.5s2.5 1 3 2" fill="none" stroke="#a9c80a" stroke-width="1"/></svg><svg class="a" style="left:1048.4px;top:521.5px" width="21" height="21" viewBox="0 0 20 20"><path d="M6 4c4 0 7 2 9 5L6.5 16z" fill="none" stroke="#e8e8e8" stroke-width="1.1"/><path d="M6.5 6c3 0 5 1.5 6.5 3.5" fill="none" stroke="#e8e8e8" stroke-width="0.7"/><circle cx="9" cy="10" r="0.9" fill="#e8e8e8"/></svg><svg class="a" style="left:1079.4px;top:521.5px" width="21" height="21" viewBox="0 0 20 20"><path d="M3 13v-3l2.5-3.5h7l3 3.5h1.5v3z" fill="none" stroke="#e8e8e8" stroke-width="1.1"/><path d="M7 7v3M11 7v3" stroke="#e8e8e8" stroke-width="0.8"/><circle cx="6" cy="13.5" r="1.3" fill="#323232" stroke="#e8e8e8" stroke-width="0.9"/><circle cx="14" cy="13.5" r="1.3" fill="#323232" stroke="#e8e8e8" stroke-width="0.9"/></svg><svg class="a" style="left:1110.7px;top:521.5px" width="21" height="21" viewBox="0 0 20 20"><path d="M10 16l-5.5-5.5c-1.8-1.8-1.8-4.5 0-6 1.8-1.3 4-1 5.5 1 1.5-2 3.7-2.3 5.5-1 1.8 1.5 1.8 4.2 0 6z" fill="none" stroke="#e8e8e8" stroke-width="1.2"/></svg><div class="a" style="left:974.7px;top:496.3px;width:40.7px;height:22.3px;background:#2b2b2b;border:1px solid #484848;"></div><div class="t" style="left:979.52px;top:503.00px;font-size:10.72px;color:#e8e8e8;transform:scaleX(0.909);transform-origin:0 0;">People</div></body></html>
